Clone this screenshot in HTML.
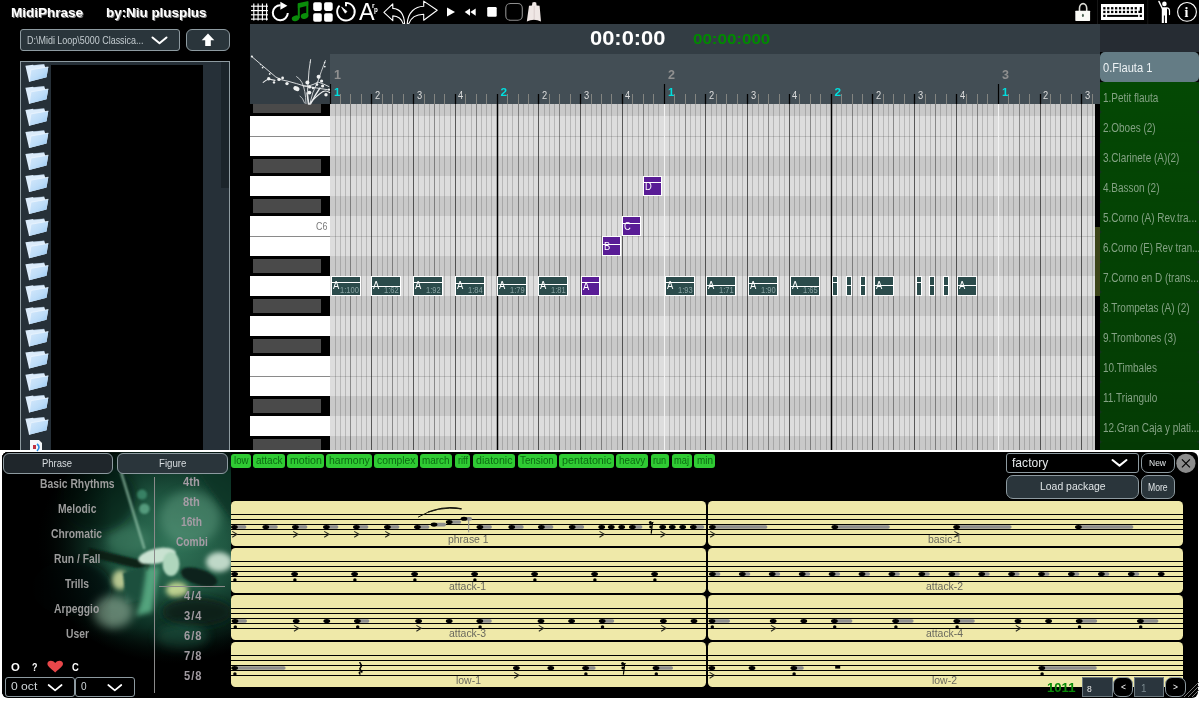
<!DOCTYPE html>
<html><head><meta charset="utf-8"><title>MidiPhrase</title>
<style>
html,body{margin:0;padding:0;}
body{width:1199px;height:704px;background:#fff;position:relative;overflow:hidden;font-family:"Liberation Sans",sans-serif;}
.t{position:absolute;white-space:nowrap;line-height:1;transform-origin:0 0;}
svg{position:absolute;left:0;top:0;overflow:visible;}
.btn{box-sizing:border-box;border:1px solid #8d9aa0;background:#2a353b;}
</style></head><body>
<div id="app" style="position:absolute;left:0;top:0;width:1199px;height:704px;will-change:transform;">
<div style="position:absolute;left:0px;top:0px;width:1199px;height:450px;background:#000;"></div>
<span class="t" style="left:10.50px;top:6.00px;font-size:13px;color:#fff;font-weight:bold;transform:scaleX(1.0381);text-shadow:1px 1px 0 #8a8a8a;">MidiPhrase</span>
<span class="t" style="left:105.50px;top:6.00px;font-size:13px;color:#fff;font-weight:bold;transform:scaleX(1.0307);text-shadow:1px 1px 0 #8a8a8a;">by:Niu plusplus</span>
<div class="btn" style="position:absolute;left:20px;top:29px;width:160px;height:22px;border-radius:3px;"></div>
<span class="t" style="left:26.60px;top:34.69px;font-size:11px;color:#c3cbcf;transform:scaleX(0.8143);">D:\Midi Loop\5000 Classica...</span>
<div class="btn" style="position:absolute;left:186px;top:29px;width:44px;height:22px;border-radius:6px;"></div>
<div style="position:absolute;left:20px;top:61px;width:210px;height:389px;box-sizing:border-box;border:1px solid #8d9aa0;border-bottom:none;background:#263038;"></div>
<div style="position:absolute;left:51px;top:65px;width:152px;height:385px;background:#000;"></div>
<div style="position:absolute;left:221px;top:62px;width:8px;height:126px;background:#1b242a;"></div>
<svg width="1199" height="704" viewBox="0 0 1199 704">
<defs><linearGradient id="fg" x1="0" y1="0" x2="1" y2="1"><stop offset="0" stop-color="#d6e9fb"/><stop offset="0.55" stop-color="#bcdcf8"/><stop offset="1" stop-color="#93c4f0"/></linearGradient></defs>
<polyline points="152.5,37.5 159.5,43.3 166.5,37.5" fill="none" stroke="#fff" stroke-width="2" stroke-linecap="round" stroke-linejoin="round"/>
<polygon points="208,33.5 214.3,40.3 210.8,40.3 210.8,46 205.2,46 205.2,40.3 201.7,40.3" fill="#fff"/>
<g transform="translate(25,64.00)"><path d="M0.4 1.8 L8.1 0.7 L8.6 1.3 L19.2 0.3 L20.3 3.4 L23.3 2.9 L21.5 13.2 L4.1 17.7 Z" fill="#dcecfb"/><path d="M5.9 5.8 L23.3 2.9 L21.5 13.2 L4.1 17.7 Z" fill="url(#fg)"/><path d="M4.3 17.4 L5.9 5.8 L23.3 2.9" fill="none" stroke="#f2f8ff" stroke-width="0.6"/><path d="M8.6 1.5 L19.2 0.5" fill="none" stroke="#b5cde4" stroke-width="0.5"/></g>
<g transform="translate(25,86.06)"><path d="M0.4 1.8 L8.1 0.7 L8.6 1.3 L19.2 0.3 L20.3 3.4 L23.3 2.9 L21.5 13.2 L4.1 17.7 Z" fill="#dcecfb"/><path d="M5.9 5.8 L23.3 2.9 L21.5 13.2 L4.1 17.7 Z" fill="url(#fg)"/><path d="M4.3 17.4 L5.9 5.8 L23.3 2.9" fill="none" stroke="#f2f8ff" stroke-width="0.6"/><path d="M8.6 1.5 L19.2 0.5" fill="none" stroke="#b5cde4" stroke-width="0.5"/></g>
<g transform="translate(25,108.12)"><path d="M0.4 1.8 L8.1 0.7 L8.6 1.3 L19.2 0.3 L20.3 3.4 L23.3 2.9 L21.5 13.2 L4.1 17.7 Z" fill="#dcecfb"/><path d="M5.9 5.8 L23.3 2.9 L21.5 13.2 L4.1 17.7 Z" fill="url(#fg)"/><path d="M4.3 17.4 L5.9 5.8 L23.3 2.9" fill="none" stroke="#f2f8ff" stroke-width="0.6"/><path d="M8.6 1.5 L19.2 0.5" fill="none" stroke="#b5cde4" stroke-width="0.5"/></g>
<g transform="translate(25,130.18)"><path d="M0.4 1.8 L8.1 0.7 L8.6 1.3 L19.2 0.3 L20.3 3.4 L23.3 2.9 L21.5 13.2 L4.1 17.7 Z" fill="#dcecfb"/><path d="M5.9 5.8 L23.3 2.9 L21.5 13.2 L4.1 17.7 Z" fill="url(#fg)"/><path d="M4.3 17.4 L5.9 5.8 L23.3 2.9" fill="none" stroke="#f2f8ff" stroke-width="0.6"/><path d="M8.6 1.5 L19.2 0.5" fill="none" stroke="#b5cde4" stroke-width="0.5"/></g>
<g transform="translate(25,152.24)"><path d="M0.4 1.8 L8.1 0.7 L8.6 1.3 L19.2 0.3 L20.3 3.4 L23.3 2.9 L21.5 13.2 L4.1 17.7 Z" fill="#dcecfb"/><path d="M5.9 5.8 L23.3 2.9 L21.5 13.2 L4.1 17.7 Z" fill="url(#fg)"/><path d="M4.3 17.4 L5.9 5.8 L23.3 2.9" fill="none" stroke="#f2f8ff" stroke-width="0.6"/><path d="M8.6 1.5 L19.2 0.5" fill="none" stroke="#b5cde4" stroke-width="0.5"/></g>
<g transform="translate(25,174.30)"><path d="M0.4 1.8 L8.1 0.7 L8.6 1.3 L19.2 0.3 L20.3 3.4 L23.3 2.9 L21.5 13.2 L4.1 17.7 Z" fill="#dcecfb"/><path d="M5.9 5.8 L23.3 2.9 L21.5 13.2 L4.1 17.7 Z" fill="url(#fg)"/><path d="M4.3 17.4 L5.9 5.8 L23.3 2.9" fill="none" stroke="#f2f8ff" stroke-width="0.6"/><path d="M8.6 1.5 L19.2 0.5" fill="none" stroke="#b5cde4" stroke-width="0.5"/></g>
<g transform="translate(25,196.36)"><path d="M0.4 1.8 L8.1 0.7 L8.6 1.3 L19.2 0.3 L20.3 3.4 L23.3 2.9 L21.5 13.2 L4.1 17.7 Z" fill="#dcecfb"/><path d="M5.9 5.8 L23.3 2.9 L21.5 13.2 L4.1 17.7 Z" fill="url(#fg)"/><path d="M4.3 17.4 L5.9 5.8 L23.3 2.9" fill="none" stroke="#f2f8ff" stroke-width="0.6"/><path d="M8.6 1.5 L19.2 0.5" fill="none" stroke="#b5cde4" stroke-width="0.5"/></g>
<g transform="translate(25,218.42)"><path d="M0.4 1.8 L8.1 0.7 L8.6 1.3 L19.2 0.3 L20.3 3.4 L23.3 2.9 L21.5 13.2 L4.1 17.7 Z" fill="#dcecfb"/><path d="M5.9 5.8 L23.3 2.9 L21.5 13.2 L4.1 17.7 Z" fill="url(#fg)"/><path d="M4.3 17.4 L5.9 5.8 L23.3 2.9" fill="none" stroke="#f2f8ff" stroke-width="0.6"/><path d="M8.6 1.5 L19.2 0.5" fill="none" stroke="#b5cde4" stroke-width="0.5"/></g>
<g transform="translate(25,240.48)"><path d="M0.4 1.8 L8.1 0.7 L8.6 1.3 L19.2 0.3 L20.3 3.4 L23.3 2.9 L21.5 13.2 L4.1 17.7 Z" fill="#dcecfb"/><path d="M5.9 5.8 L23.3 2.9 L21.5 13.2 L4.1 17.7 Z" fill="url(#fg)"/><path d="M4.3 17.4 L5.9 5.8 L23.3 2.9" fill="none" stroke="#f2f8ff" stroke-width="0.6"/><path d="M8.6 1.5 L19.2 0.5" fill="none" stroke="#b5cde4" stroke-width="0.5"/></g>
<g transform="translate(25,262.54)"><path d="M0.4 1.8 L8.1 0.7 L8.6 1.3 L19.2 0.3 L20.3 3.4 L23.3 2.9 L21.5 13.2 L4.1 17.7 Z" fill="#dcecfb"/><path d="M5.9 5.8 L23.3 2.9 L21.5 13.2 L4.1 17.7 Z" fill="url(#fg)"/><path d="M4.3 17.4 L5.9 5.8 L23.3 2.9" fill="none" stroke="#f2f8ff" stroke-width="0.6"/><path d="M8.6 1.5 L19.2 0.5" fill="none" stroke="#b5cde4" stroke-width="0.5"/></g>
<g transform="translate(25,284.60)"><path d="M0.4 1.8 L8.1 0.7 L8.6 1.3 L19.2 0.3 L20.3 3.4 L23.3 2.9 L21.5 13.2 L4.1 17.7 Z" fill="#dcecfb"/><path d="M5.9 5.8 L23.3 2.9 L21.5 13.2 L4.1 17.7 Z" fill="url(#fg)"/><path d="M4.3 17.4 L5.9 5.8 L23.3 2.9" fill="none" stroke="#f2f8ff" stroke-width="0.6"/><path d="M8.6 1.5 L19.2 0.5" fill="none" stroke="#b5cde4" stroke-width="0.5"/></g>
<g transform="translate(25,306.66)"><path d="M0.4 1.8 L8.1 0.7 L8.6 1.3 L19.2 0.3 L20.3 3.4 L23.3 2.9 L21.5 13.2 L4.1 17.7 Z" fill="#dcecfb"/><path d="M5.9 5.8 L23.3 2.9 L21.5 13.2 L4.1 17.7 Z" fill="url(#fg)"/><path d="M4.3 17.4 L5.9 5.8 L23.3 2.9" fill="none" stroke="#f2f8ff" stroke-width="0.6"/><path d="M8.6 1.5 L19.2 0.5" fill="none" stroke="#b5cde4" stroke-width="0.5"/></g>
<g transform="translate(25,328.72)"><path d="M0.4 1.8 L8.1 0.7 L8.6 1.3 L19.2 0.3 L20.3 3.4 L23.3 2.9 L21.5 13.2 L4.1 17.7 Z" fill="#dcecfb"/><path d="M5.9 5.8 L23.3 2.9 L21.5 13.2 L4.1 17.7 Z" fill="url(#fg)"/><path d="M4.3 17.4 L5.9 5.8 L23.3 2.9" fill="none" stroke="#f2f8ff" stroke-width="0.6"/><path d="M8.6 1.5 L19.2 0.5" fill="none" stroke="#b5cde4" stroke-width="0.5"/></g>
<g transform="translate(25,350.78)"><path d="M0.4 1.8 L8.1 0.7 L8.6 1.3 L19.2 0.3 L20.3 3.4 L23.3 2.9 L21.5 13.2 L4.1 17.7 Z" fill="#dcecfb"/><path d="M5.9 5.8 L23.3 2.9 L21.5 13.2 L4.1 17.7 Z" fill="url(#fg)"/><path d="M4.3 17.4 L5.9 5.8 L23.3 2.9" fill="none" stroke="#f2f8ff" stroke-width="0.6"/><path d="M8.6 1.5 L19.2 0.5" fill="none" stroke="#b5cde4" stroke-width="0.5"/></g>
<g transform="translate(25,372.84)"><path d="M0.4 1.8 L8.1 0.7 L8.6 1.3 L19.2 0.3 L20.3 3.4 L23.3 2.9 L21.5 13.2 L4.1 17.7 Z" fill="#dcecfb"/><path d="M5.9 5.8 L23.3 2.9 L21.5 13.2 L4.1 17.7 Z" fill="url(#fg)"/><path d="M4.3 17.4 L5.9 5.8 L23.3 2.9" fill="none" stroke="#f2f8ff" stroke-width="0.6"/><path d="M8.6 1.5 L19.2 0.5" fill="none" stroke="#b5cde4" stroke-width="0.5"/></g>
<g transform="translate(25,394.90)"><path d="M0.4 1.8 L8.1 0.7 L8.6 1.3 L19.2 0.3 L20.3 3.4 L23.3 2.9 L21.5 13.2 L4.1 17.7 Z" fill="#dcecfb"/><path d="M5.9 5.8 L23.3 2.9 L21.5 13.2 L4.1 17.7 Z" fill="url(#fg)"/><path d="M4.3 17.4 L5.9 5.8 L23.3 2.9" fill="none" stroke="#f2f8ff" stroke-width="0.6"/><path d="M8.6 1.5 L19.2 0.5" fill="none" stroke="#b5cde4" stroke-width="0.5"/></g>
<g transform="translate(25,416.96)"><path d="M0.4 1.8 L8.1 0.7 L8.6 1.3 L19.2 0.3 L20.3 3.4 L23.3 2.9 L21.5 13.2 L4.1 17.7 Z" fill="#dcecfb"/><path d="M5.9 5.8 L23.3 2.9 L21.5 13.2 L4.1 17.7 Z" fill="url(#fg)"/><path d="M4.3 17.4 L5.9 5.8 L23.3 2.9" fill="none" stroke="#f2f8ff" stroke-width="0.6"/><path d="M8.6 1.5 L19.2 0.5" fill="none" stroke="#b5cde4" stroke-width="0.5"/></g>
<polygon points="30,440 39,440 42,443 42,450 30,450" fill="#f4f6f8"/>
<rect x="33" y="445" width="3" height="4" fill="#c03040"/><path d="M37 444 q4 3 0 7" stroke="#2a8ae0" stroke-width="1.6" fill="none"/>
<line x1="253.8" y1="3.5" x2="253.8" y2="20.5" stroke="#fff" stroke-width="1.15"/>
<line x1="251" y1="6.2" x2="268" y2="6.2" stroke="#fff" stroke-width="1.15"/>
<line x1="258.1" y1="3.5" x2="258.1" y2="20.5" stroke="#fff" stroke-width="1.15"/>
<line x1="251" y1="10.6" x2="268" y2="10.6" stroke="#fff" stroke-width="1.15"/>
<line x1="262.4" y1="3.5" x2="262.4" y2="20.5" stroke="#fff" stroke-width="1.15"/>
<line x1="251" y1="14.8" x2="268" y2="14.8" stroke="#fff" stroke-width="1.15"/>
<line x1="266.6" y1="3.5" x2="266.6" y2="20.5" stroke="#fff" stroke-width="1.15"/>
<line x1="251" y1="19.1" x2="268" y2="19.1" stroke="#fff" stroke-width="1.15"/>
<path d="M280.6 5.3 A7.5 7.5 0 1 0 287.8 13" fill="none" stroke="#fff" stroke-width="2"/>
<polygon points="280.4,1.8 287.4,5.7 280.4,9.7" fill="#fff"/>
<g fill="#0a8c0a"><path d="M297.8 3.2 L308.3 0.9 L308.3 5.6 L297.8 8.2 Z"/><rect x="297.8" y="4" width="2" height="14"/><rect x="306.3" y="2" width="2" height="13.6"/><ellipse cx="295.6" cy="18.3" rx="3.9" ry="2.8" transform="rotate(-18 295.6 18.3)"/><ellipse cx="304.6" cy="16" rx="3.9" ry="2.8" transform="rotate(-18 304.6 16)"/></g>
<rect x="313.2" y="2.3" width="8.6" height="8.6" rx="1.8" fill="#fff"/>
<rect x="324.1" y="2.3" width="8.6" height="8.6" rx="1.8" fill="#fff"/>
<rect x="313.2" y="13.2" width="8.6" height="8.6" rx="1.8" fill="#fff"/>
<rect x="324.1" y="13.2" width="8.6" height="8.6" rx="1.8" fill="#fff"/>
<path d="M346 6.2 L346 2.9 A8.8 8.8 0 1 1 339.6 5.6" fill="none" stroke="#fff" stroke-width="1.9"/>
<path d="M341.6 7.2 L346.9 11.4 L345.3 13.2 Z" fill="#fff" stroke="#fff" stroke-width="0.8" stroke-linejoin="round"/>
<path d="M383.9 12.3 L392.8 3.9 L392.8 8.4 C399.5 8.8 404 13.5 404.6 23.8 L403.2 23.8 C401.6 19 398.6 16.2 392.8 15.9 L392.8 20.7 Z" fill="none" stroke="#fff" stroke-width="1.1" stroke-linejoin="round"/>
<path d="M437.2 10.3 L423.7 1.1 L423.7 6.3 C415 6.6 408 12 407.2 23.8 L408.7 23.8 C411 17.5 416 14.4 423.7 14.3 L423.7 20.2 Z" fill="none" stroke="#fff" stroke-width="1.1" stroke-linejoin="round"/>
<polygon points="447,7.4 455,12 447,16.6" fill="#fff"/>
<polygon points="470,8.4 470,15.7 464.7,12" fill="#fff"/><polygon points="475.7,8.4 475.7,15.7 470.3,12" fill="#fff"/>
<rect x="487.2" y="7" width="9.5" height="9.7" rx="1.2" fill="#fff"/>
<rect x="505.8" y="3.5" width="16.5" height="16.8" rx="4.5" fill="none" stroke="#8e8e8e" stroke-width="1.1"/>
<path d="M532.4 2.6 Q534.3 1.4 536.2 2.6 L536.6 5.4 L539.6 5.8 L541 21.4 Q534 18.2 526.8 21.4 L529 5.8 L532 5.4 Z" fill="#efe7e5"/>
<line x1="534.2" y1="6" x2="534.2" y2="19.6" stroke="#d4c8c6" stroke-width="0.8"/>
<path d="M1079.5 11.4 L1079.5 8.2 A3.6 4.6 0 0 1 1086.7 8.2 L1086.7 11.4" fill="none" stroke="#dcdcd6" stroke-width="1.6"/>
<rect x="1075.3" y="10.7" width="14.8" height="10.2" rx="0.6" fill="#fafaf6"/><ellipse cx="1082.9" cy="15.4" rx="1" ry="1.6" fill="#4a6050"/>
<rect x="1101" y="4" width="43" height="16" fill="#fff"/>
<rect x="1103.20" y="7.1" width="2.3" height="2.3" fill="#000"/>
<rect x="1107.13" y="7.1" width="2.3" height="2.3" fill="#000"/>
<rect x="1111.06" y="7.1" width="2.3" height="2.3" fill="#000"/>
<rect x="1114.99" y="7.1" width="2.3" height="2.3" fill="#000"/>
<rect x="1118.92" y="7.1" width="2.3" height="2.3" fill="#000"/>
<rect x="1122.85" y="7.1" width="2.3" height="2.3" fill="#000"/>
<rect x="1126.78" y="7.1" width="2.3" height="2.3" fill="#000"/>
<rect x="1130.71" y="7.1" width="2.3" height="2.3" fill="#000"/>
<rect x="1134.64" y="7.1" width="2.3" height="2.3" fill="#000"/>
<rect x="1103.20" y="10.8" width="2.3" height="2.3" fill="#000"/>
<rect x="1107.13" y="10.8" width="2.3" height="2.3" fill="#000"/>
<rect x="1111.06" y="10.8" width="2.3" height="2.3" fill="#000"/>
<rect x="1114.99" y="10.8" width="2.3" height="2.3" fill="#000"/>
<rect x="1118.92" y="10.8" width="2.3" height="2.3" fill="#000"/>
<rect x="1122.85" y="10.8" width="2.3" height="2.3" fill="#000"/>
<rect x="1126.78" y="10.8" width="2.3" height="2.3" fill="#000"/>
<rect x="1130.71" y="10.8" width="2.3" height="2.3" fill="#000"/>
<rect x="1134.64" y="10.8" width="2.3" height="2.3" fill="#000"/>
<path d="M1139.8 7.1 L1141.9 7.1 L1141.9 13.1 L1138.4 13.1 L1138.4 10.8 L1139.8 10.8 Z" fill="#000"/>
<rect x="1103.2" y="14.8" width="2.3" height="2.2" fill="#000"/><rect x="1107.1" y="14.9" width="31" height="2" fill="#000"/><rect x="1139.7" y="14.8" width="2.2" height="2.2" fill="#000"/>
<rect x="1147.4" y="0" width="0.8" height="24" fill="#1c1c1c"/><rect x="1097.2" y="0" width="0.8" height="24" fill="#1c1c1c"/>
<circle cx="1164.4" cy="3.9" r="2.3" fill="#fff"/>
<path d="M1161.8 8.6 Q1161.8 7.2 1163.2 7.2 L1165.6 7.2 Q1167 7.2 1167 8.6 L1167 23 L1164.9 23 L1164.9 15.4 L1163.9 15.4 L1163.9 23 L1161.8 23 Z" fill="#fff"/>
<path d="M1162.6 9 L1158.9 1.4" fill="none" stroke="#fff" stroke-width="1.4" stroke-linecap="round"/>
<path d="M1166.6 7.9 Q1169.5 8 1169.5 10.8 L1169.5 14.6" fill="none" stroke="#fff" stroke-width="1.2" stroke-linecap="round"/>
<circle cx="1187" cy="11.9" r="9.4" fill="none" stroke="#fff" stroke-width="1.1"/>
</svg>
<span class="t" style="left:359.20px;top:-0.15px;font-size:23.8px;color:#fff;transform:scaleX(0.9827);">A</span>
<span class="t" style="left:371.50px;top:1.84px;font-size:7.4px;color:#fff;font-weight:bold;transform:scaleX(0.9029);">r</span>
<span class="t" style="left:374.30px;top:6.43px;font-size:8px;color:#fff;font-weight:bold;transform:scaleX(0.7776);">p</span>
<span class="t" style="left:1184.6px;top:5.9px;font-size:14px;color:#fff;font-family:'Liberation Serif',serif;font-weight:bold;">i</span>
<div style="position:absolute;left:250px;top:24px;width:850px;height:80px;background:#333d44;"></div>
<div style="position:absolute;left:330px;top:54px;width:770px;height:50px;background:#434e55;"></div>
<div style="position:absolute;left:1100px;top:24px;width:99px;height:28px;background:#262c33;"></div>
<span class="t" style="left:590.30px;top:29.11px;font-size:19.6px;color:#fff;font-weight:bold;transform:scaleX(1.1175);">00:0:00</span>
<span class="t" style="left:693.00px;top:32.44px;font-size:14.6px;color:#008a00;font-weight:bold;transform:scaleX(1.1613);">00:00:000</span>
<svg width="1199" height="704" viewBox="0 0 1199 704" shape-rendering="crispEdges">
<rect x="250" y="104" width="80" height="346" fill="#fff"/>
<rect x="330" y="104" width="765" height="346" fill="#dddddd"/>
<rect x="250" y="104" width="80" height="12" fill="#000"/>
<rect x="253" y="104" width="68" height="9" fill="#4a4a4a"/>
<rect x="330" y="104" width="765" height="12" fill="#c9c9c9"/>
<rect x="250" y="156" width="80" height="20" fill="#000"/>
<rect x="253" y="159" width="68" height="14" fill="#4a4a4a"/>
<rect x="330" y="156" width="765" height="20" fill="#c9c9c9"/>
<rect x="250" y="196" width="80" height="20" fill="#000"/>
<rect x="253" y="199" width="68" height="14" fill="#4a4a4a"/>
<rect x="330" y="196" width="765" height="20" fill="#c9c9c9"/>
<rect x="250" y="256" width="80" height="20" fill="#000"/>
<rect x="253" y="259" width="68" height="14" fill="#4a4a4a"/>
<rect x="330" y="256" width="765" height="20" fill="#c9c9c9"/>
<rect x="250" y="296" width="80" height="20" fill="#000"/>
<rect x="253" y="299" width="68" height="14" fill="#4a4a4a"/>
<rect x="330" y="296" width="765" height="20" fill="#c9c9c9"/>
<rect x="250" y="336" width="80" height="20" fill="#000"/>
<rect x="253" y="339" width="68" height="14" fill="#4a4a4a"/>
<rect x="330" y="336" width="765" height="20" fill="#c9c9c9"/>
<rect x="250" y="396" width="80" height="20" fill="#000"/>
<rect x="253" y="399" width="68" height="14" fill="#4a4a4a"/>
<rect x="330" y="396" width="765" height="20" fill="#c9c9c9"/>
<rect x="250" y="436" width="80" height="14" fill="#000"/>
<rect x="253" y="439" width="68" height="11" fill="#4a4a4a"/>
<rect x="330" y="436" width="765" height="14" fill="#c9c9c9"/>
<rect x="250" y="136" width="80" height="1" fill="#8a8a8a"/>
<rect x="330" y="136" width="765" height="1" fill="#bdbdbd"/>
<rect x="250" y="236" width="80" height="1" fill="#8a8a8a"/>
<rect x="330" y="236" width="765" height="1" fill="#bdbdbd"/>
<rect x="250" y="376" width="80" height="1" fill="#8a8a8a"/>
<rect x="330" y="376" width="765" height="1" fill="#bdbdbd"/>
</svg>
<svg width="1199" height="704" viewBox="0 0 1199 704">
<line x1="330.50" y1="84" x2="330.50" y2="104" stroke="#000" stroke-width="1.2"/>
<line x1="335.50" y1="104" x2="335.50" y2="450" stroke="#000" stroke-opacity="0.17" stroke-width="1"/>
<line x1="340.50" y1="104" x2="340.50" y2="450" stroke="#000" stroke-opacity="0.17" stroke-width="1"/>
<line x1="340.50" y1="94" x2="340.50" y2="104" stroke="#8a8a86" stroke-width="0.9"/>
<line x1="345.50" y1="104" x2="345.50" y2="450" stroke="#000" stroke-opacity="0.17" stroke-width="1"/>
<line x1="350.50" y1="104" x2="350.50" y2="450" stroke="#000" stroke-opacity="0.38" stroke-width="1"/>
<line x1="350.50" y1="94" x2="350.50" y2="104" stroke="#8a8a86" stroke-width="0.9"/>
<line x1="356.50" y1="104" x2="356.50" y2="450" stroke="#000" stroke-opacity="0.17" stroke-width="1"/>
<line x1="361.50" y1="104" x2="361.50" y2="450" stroke="#000" stroke-opacity="0.17" stroke-width="1"/>
<line x1="361.50" y1="94" x2="361.50" y2="104" stroke="#8a8a86" stroke-width="0.9"/>
<line x1="366.50" y1="104" x2="366.50" y2="450" stroke="#000" stroke-opacity="0.17" stroke-width="1"/>
<line x1="371.50" y1="104" x2="371.50" y2="450" stroke="#000" stroke-opacity="0.6" stroke-width="1"/>
<line x1="371.50" y1="94" x2="371.50" y2="104" stroke="#000" stroke-width="1.3"/>
<line x1="377.50" y1="104" x2="377.50" y2="450" stroke="#000" stroke-opacity="0.17" stroke-width="1"/>
<line x1="382.50" y1="104" x2="382.50" y2="450" stroke="#000" stroke-opacity="0.17" stroke-width="1"/>
<line x1="382.50" y1="94" x2="382.50" y2="104" stroke="#8a8a86" stroke-width="0.9"/>
<line x1="387.50" y1="104" x2="387.50" y2="450" stroke="#000" stroke-opacity="0.17" stroke-width="1"/>
<line x1="392.50" y1="104" x2="392.50" y2="450" stroke="#000" stroke-opacity="0.38" stroke-width="1"/>
<line x1="392.50" y1="94" x2="392.50" y2="104" stroke="#8a8a86" stroke-width="0.9"/>
<line x1="397.50" y1="104" x2="397.50" y2="450" stroke="#000" stroke-opacity="0.17" stroke-width="1"/>
<line x1="403.50" y1="104" x2="403.50" y2="450" stroke="#000" stroke-opacity="0.17" stroke-width="1"/>
<line x1="403.50" y1="94" x2="403.50" y2="104" stroke="#8a8a86" stroke-width="0.9"/>
<line x1="408.50" y1="104" x2="408.50" y2="450" stroke="#000" stroke-opacity="0.17" stroke-width="1"/>
<line x1="413.50" y1="104" x2="413.50" y2="450" stroke="#000" stroke-opacity="0.6" stroke-width="1"/>
<line x1="413.50" y1="94" x2="413.50" y2="104" stroke="#000" stroke-width="1.3"/>
<line x1="418.50" y1="104" x2="418.50" y2="450" stroke="#000" stroke-opacity="0.17" stroke-width="1"/>
<line x1="424.50" y1="104" x2="424.50" y2="450" stroke="#000" stroke-opacity="0.17" stroke-width="1"/>
<line x1="424.50" y1="94" x2="424.50" y2="104" stroke="#8a8a86" stroke-width="0.9"/>
<line x1="429.50" y1="104" x2="429.50" y2="450" stroke="#000" stroke-opacity="0.17" stroke-width="1"/>
<line x1="434.50" y1="104" x2="434.50" y2="450" stroke="#000" stroke-opacity="0.38" stroke-width="1"/>
<line x1="434.50" y1="94" x2="434.50" y2="104" stroke="#8a8a86" stroke-width="0.9"/>
<line x1="439.50" y1="104" x2="439.50" y2="450" stroke="#000" stroke-opacity="0.17" stroke-width="1"/>
<line x1="444.50" y1="104" x2="444.50" y2="450" stroke="#000" stroke-opacity="0.17" stroke-width="1"/>
<line x1="444.50" y1="94" x2="444.50" y2="104" stroke="#8a8a86" stroke-width="0.9"/>
<line x1="450.50" y1="104" x2="450.50" y2="450" stroke="#000" stroke-opacity="0.17" stroke-width="1"/>
<line x1="455.50" y1="104" x2="455.50" y2="450" stroke="#000" stroke-opacity="0.6" stroke-width="1"/>
<line x1="455.50" y1="94" x2="455.50" y2="104" stroke="#000" stroke-width="1.3"/>
<line x1="460.50" y1="104" x2="460.50" y2="450" stroke="#000" stroke-opacity="0.17" stroke-width="1"/>
<line x1="465.50" y1="104" x2="465.50" y2="450" stroke="#000" stroke-opacity="0.17" stroke-width="1"/>
<line x1="465.50" y1="94" x2="465.50" y2="104" stroke="#8a8a86" stroke-width="0.9"/>
<line x1="471.50" y1="104" x2="471.50" y2="450" stroke="#000" stroke-opacity="0.17" stroke-width="1"/>
<line x1="476.50" y1="104" x2="476.50" y2="450" stroke="#000" stroke-opacity="0.38" stroke-width="1"/>
<line x1="476.50" y1="94" x2="476.50" y2="104" stroke="#8a8a86" stroke-width="0.9"/>
<line x1="481.50" y1="104" x2="481.50" y2="450" stroke="#000" stroke-opacity="0.17" stroke-width="1"/>
<line x1="486.50" y1="104" x2="486.50" y2="450" stroke="#000" stroke-opacity="0.17" stroke-width="1"/>
<line x1="486.50" y1="94" x2="486.50" y2="104" stroke="#8a8a86" stroke-width="0.9"/>
<line x1="491.50" y1="104" x2="491.50" y2="450" stroke="#000" stroke-opacity="0.17" stroke-width="1"/>
<line x1="497.50" y1="104" x2="497.50" y2="450" stroke="#000" stroke-opacity="1" stroke-width="1.5"/>
<line x1="497.50" y1="94" x2="497.50" y2="104" stroke="#000" stroke-width="1.3"/>
<line x1="502.50" y1="104" x2="502.50" y2="450" stroke="#000" stroke-opacity="0.17" stroke-width="1"/>
<line x1="507.50" y1="104" x2="507.50" y2="450" stroke="#000" stroke-opacity="0.17" stroke-width="1"/>
<line x1="507.50" y1="94" x2="507.50" y2="104" stroke="#8a8a86" stroke-width="0.9"/>
<line x1="512.50" y1="104" x2="512.50" y2="450" stroke="#000" stroke-opacity="0.17" stroke-width="1"/>
<line x1="518.50" y1="104" x2="518.50" y2="450" stroke="#000" stroke-opacity="0.38" stroke-width="1"/>
<line x1="518.50" y1="94" x2="518.50" y2="104" stroke="#8a8a86" stroke-width="0.9"/>
<line x1="523.50" y1="104" x2="523.50" y2="450" stroke="#000" stroke-opacity="0.17" stroke-width="1"/>
<line x1="528.50" y1="104" x2="528.50" y2="450" stroke="#000" stroke-opacity="0.17" stroke-width="1"/>
<line x1="528.50" y1="94" x2="528.50" y2="104" stroke="#8a8a86" stroke-width="0.9"/>
<line x1="533.50" y1="104" x2="533.50" y2="450" stroke="#000" stroke-opacity="0.17" stroke-width="1"/>
<line x1="538.50" y1="104" x2="538.50" y2="450" stroke="#000" stroke-opacity="0.6" stroke-width="1"/>
<line x1="538.50" y1="94" x2="538.50" y2="104" stroke="#000" stroke-width="1.3"/>
<line x1="544.50" y1="104" x2="544.50" y2="450" stroke="#000" stroke-opacity="0.17" stroke-width="1"/>
<line x1="549.50" y1="104" x2="549.50" y2="450" stroke="#000" stroke-opacity="0.17" stroke-width="1"/>
<line x1="549.50" y1="94" x2="549.50" y2="104" stroke="#8a8a86" stroke-width="0.9"/>
<line x1="554.50" y1="104" x2="554.50" y2="450" stroke="#000" stroke-opacity="0.17" stroke-width="1"/>
<line x1="559.50" y1="104" x2="559.50" y2="450" stroke="#000" stroke-opacity="0.38" stroke-width="1"/>
<line x1="559.50" y1="94" x2="559.50" y2="104" stroke="#8a8a86" stroke-width="0.9"/>
<line x1="565.50" y1="104" x2="565.50" y2="450" stroke="#000" stroke-opacity="0.17" stroke-width="1"/>
<line x1="570.50" y1="104" x2="570.50" y2="450" stroke="#000" stroke-opacity="0.17" stroke-width="1"/>
<line x1="570.50" y1="94" x2="570.50" y2="104" stroke="#8a8a86" stroke-width="0.9"/>
<line x1="575.50" y1="104" x2="575.50" y2="450" stroke="#000" stroke-opacity="0.17" stroke-width="1"/>
<line x1="580.50" y1="104" x2="580.50" y2="450" stroke="#000" stroke-opacity="0.6" stroke-width="1"/>
<line x1="580.50" y1="94" x2="580.50" y2="104" stroke="#000" stroke-width="1.3"/>
<line x1="585.50" y1="104" x2="585.50" y2="450" stroke="#000" stroke-opacity="0.17" stroke-width="1"/>
<line x1="591.50" y1="104" x2="591.50" y2="450" stroke="#000" stroke-opacity="0.17" stroke-width="1"/>
<line x1="591.50" y1="94" x2="591.50" y2="104" stroke="#8a8a86" stroke-width="0.9"/>
<line x1="596.50" y1="104" x2="596.50" y2="450" stroke="#000" stroke-opacity="0.17" stroke-width="1"/>
<line x1="601.50" y1="104" x2="601.50" y2="450" stroke="#000" stroke-opacity="0.38" stroke-width="1"/>
<line x1="601.50" y1="94" x2="601.50" y2="104" stroke="#8a8a86" stroke-width="0.9"/>
<line x1="606.50" y1="104" x2="606.50" y2="450" stroke="#000" stroke-opacity="0.17" stroke-width="1"/>
<line x1="611.50" y1="104" x2="611.50" y2="450" stroke="#000" stroke-opacity="0.17" stroke-width="1"/>
<line x1="611.50" y1="94" x2="611.50" y2="104" stroke="#8a8a86" stroke-width="0.9"/>
<line x1="617.50" y1="104" x2="617.50" y2="450" stroke="#000" stroke-opacity="0.17" stroke-width="1"/>
<line x1="622.50" y1="104" x2="622.50" y2="450" stroke="#000" stroke-opacity="0.6" stroke-width="1"/>
<line x1="622.50" y1="94" x2="622.50" y2="104" stroke="#000" stroke-width="1.3"/>
<line x1="627.50" y1="104" x2="627.50" y2="450" stroke="#000" stroke-opacity="0.17" stroke-width="1"/>
<line x1="632.50" y1="104" x2="632.50" y2="450" stroke="#000" stroke-opacity="0.17" stroke-width="1"/>
<line x1="632.50" y1="94" x2="632.50" y2="104" stroke="#8a8a86" stroke-width="0.9"/>
<line x1="638.50" y1="104" x2="638.50" y2="450" stroke="#000" stroke-opacity="0.17" stroke-width="1"/>
<line x1="643.50" y1="104" x2="643.50" y2="450" stroke="#000" stroke-opacity="0.38" stroke-width="1"/>
<line x1="643.50" y1="94" x2="643.50" y2="104" stroke="#8a8a86" stroke-width="0.9"/>
<line x1="648.50" y1="104" x2="648.50" y2="450" stroke="#000" stroke-opacity="0.17" stroke-width="1"/>
<line x1="653.50" y1="104" x2="653.50" y2="450" stroke="#000" stroke-opacity="0.17" stroke-width="1"/>
<line x1="653.50" y1="94" x2="653.50" y2="104" stroke="#8a8a86" stroke-width="0.9"/>
<line x1="658.50" y1="104" x2="658.50" y2="450" stroke="#000" stroke-opacity="0.17" stroke-width="1"/>
<line x1="664.50" y1="104" x2="664.50" y2="450" stroke="#f2f2f2" stroke-opacity="1" stroke-width="1"/>
<line x1="664.50" y1="84" x2="664.50" y2="104" stroke="#000" stroke-width="1.2"/>
<line x1="669.50" y1="104" x2="669.50" y2="450" stroke="#000" stroke-opacity="0.17" stroke-width="1"/>
<line x1="674.50" y1="104" x2="674.50" y2="450" stroke="#000" stroke-opacity="0.17" stroke-width="1"/>
<line x1="674.50" y1="94" x2="674.50" y2="104" stroke="#8a8a86" stroke-width="0.9"/>
<line x1="679.50" y1="104" x2="679.50" y2="450" stroke="#000" stroke-opacity="0.17" stroke-width="1"/>
<line x1="685.50" y1="104" x2="685.50" y2="450" stroke="#000" stroke-opacity="0.38" stroke-width="1"/>
<line x1="685.50" y1="94" x2="685.50" y2="104" stroke="#8a8a86" stroke-width="0.9"/>
<line x1="690.50" y1="104" x2="690.50" y2="450" stroke="#000" stroke-opacity="0.17" stroke-width="1"/>
<line x1="695.50" y1="104" x2="695.50" y2="450" stroke="#000" stroke-opacity="0.17" stroke-width="1"/>
<line x1="695.50" y1="94" x2="695.50" y2="104" stroke="#8a8a86" stroke-width="0.9"/>
<line x1="700.50" y1="104" x2="700.50" y2="450" stroke="#000" stroke-opacity="0.17" stroke-width="1"/>
<line x1="705.50" y1="104" x2="705.50" y2="450" stroke="#000" stroke-opacity="0.6" stroke-width="1"/>
<line x1="705.50" y1="94" x2="705.50" y2="104" stroke="#000" stroke-width="1.3"/>
<line x1="711.50" y1="104" x2="711.50" y2="450" stroke="#000" stroke-opacity="0.17" stroke-width="1"/>
<line x1="716.50" y1="104" x2="716.50" y2="450" stroke="#000" stroke-opacity="0.17" stroke-width="1"/>
<line x1="716.50" y1="94" x2="716.50" y2="104" stroke="#8a8a86" stroke-width="0.9"/>
<line x1="721.50" y1="104" x2="721.50" y2="450" stroke="#000" stroke-opacity="0.17" stroke-width="1"/>
<line x1="726.50" y1="104" x2="726.50" y2="450" stroke="#000" stroke-opacity="0.38" stroke-width="1"/>
<line x1="726.50" y1="94" x2="726.50" y2="104" stroke="#8a8a86" stroke-width="0.9"/>
<line x1="732.50" y1="104" x2="732.50" y2="450" stroke="#000" stroke-opacity="0.17" stroke-width="1"/>
<line x1="737.50" y1="104" x2="737.50" y2="450" stroke="#000" stroke-opacity="0.17" stroke-width="1"/>
<line x1="737.50" y1="94" x2="737.50" y2="104" stroke="#8a8a86" stroke-width="0.9"/>
<line x1="742.50" y1="104" x2="742.50" y2="450" stroke="#000" stroke-opacity="0.17" stroke-width="1"/>
<line x1="747.50" y1="104" x2="747.50" y2="450" stroke="#000" stroke-opacity="0.6" stroke-width="1"/>
<line x1="747.50" y1="94" x2="747.50" y2="104" stroke="#000" stroke-width="1.3"/>
<line x1="752.50" y1="104" x2="752.50" y2="450" stroke="#000" stroke-opacity="0.17" stroke-width="1"/>
<line x1="758.50" y1="104" x2="758.50" y2="450" stroke="#000" stroke-opacity="0.17" stroke-width="1"/>
<line x1="758.50" y1="94" x2="758.50" y2="104" stroke="#8a8a86" stroke-width="0.9"/>
<line x1="763.50" y1="104" x2="763.50" y2="450" stroke="#000" stroke-opacity="0.17" stroke-width="1"/>
<line x1="768.50" y1="104" x2="768.50" y2="450" stroke="#000" stroke-opacity="0.38" stroke-width="1"/>
<line x1="768.50" y1="94" x2="768.50" y2="104" stroke="#8a8a86" stroke-width="0.9"/>
<line x1="773.50" y1="104" x2="773.50" y2="450" stroke="#000" stroke-opacity="0.17" stroke-width="1"/>
<line x1="779.50" y1="104" x2="779.50" y2="450" stroke="#000" stroke-opacity="0.17" stroke-width="1"/>
<line x1="779.50" y1="94" x2="779.50" y2="104" stroke="#8a8a86" stroke-width="0.9"/>
<line x1="784.50" y1="104" x2="784.50" y2="450" stroke="#000" stroke-opacity="0.17" stroke-width="1"/>
<line x1="789.50" y1="104" x2="789.50" y2="450" stroke="#000" stroke-opacity="0.6" stroke-width="1"/>
<line x1="789.50" y1="94" x2="789.50" y2="104" stroke="#000" stroke-width="1.3"/>
<line x1="794.50" y1="104" x2="794.50" y2="450" stroke="#000" stroke-opacity="0.17" stroke-width="1"/>
<line x1="799.50" y1="104" x2="799.50" y2="450" stroke="#000" stroke-opacity="0.17" stroke-width="1"/>
<line x1="799.50" y1="94" x2="799.50" y2="104" stroke="#8a8a86" stroke-width="0.9"/>
<line x1="805.50" y1="104" x2="805.50" y2="450" stroke="#000" stroke-opacity="0.17" stroke-width="1"/>
<line x1="810.50" y1="104" x2="810.50" y2="450" stroke="#000" stroke-opacity="0.38" stroke-width="1"/>
<line x1="810.50" y1="94" x2="810.50" y2="104" stroke="#8a8a86" stroke-width="0.9"/>
<line x1="815.50" y1="104" x2="815.50" y2="450" stroke="#000" stroke-opacity="0.17" stroke-width="1"/>
<line x1="820.50" y1="104" x2="820.50" y2="450" stroke="#000" stroke-opacity="0.17" stroke-width="1"/>
<line x1="820.50" y1="94" x2="820.50" y2="104" stroke="#8a8a86" stroke-width="0.9"/>
<line x1="826.50" y1="104" x2="826.50" y2="450" stroke="#000" stroke-opacity="0.17" stroke-width="1"/>
<line x1="831.50" y1="104" x2="831.50" y2="450" stroke="#000" stroke-opacity="1" stroke-width="1.5"/>
<line x1="831.50" y1="94" x2="831.50" y2="104" stroke="#000" stroke-width="1.3"/>
<line x1="836.50" y1="104" x2="836.50" y2="450" stroke="#000" stroke-opacity="0.17" stroke-width="1"/>
<line x1="841.50" y1="104" x2="841.50" y2="450" stroke="#000" stroke-opacity="0.17" stroke-width="1"/>
<line x1="841.50" y1="94" x2="841.50" y2="104" stroke="#8a8a86" stroke-width="0.9"/>
<line x1="846.50" y1="104" x2="846.50" y2="450" stroke="#000" stroke-opacity="0.17" stroke-width="1"/>
<line x1="852.50" y1="104" x2="852.50" y2="450" stroke="#000" stroke-opacity="0.38" stroke-width="1"/>
<line x1="852.50" y1="94" x2="852.50" y2="104" stroke="#8a8a86" stroke-width="0.9"/>
<line x1="857.50" y1="104" x2="857.50" y2="450" stroke="#000" stroke-opacity="0.17" stroke-width="1"/>
<line x1="862.50" y1="104" x2="862.50" y2="450" stroke="#000" stroke-opacity="0.17" stroke-width="1"/>
<line x1="862.50" y1="94" x2="862.50" y2="104" stroke="#8a8a86" stroke-width="0.9"/>
<line x1="867.50" y1="104" x2="867.50" y2="450" stroke="#000" stroke-opacity="0.17" stroke-width="1"/>
<line x1="872.50" y1="104" x2="872.50" y2="450" stroke="#000" stroke-opacity="0.6" stroke-width="1"/>
<line x1="872.50" y1="94" x2="872.50" y2="104" stroke="#000" stroke-width="1.3"/>
<line x1="878.50" y1="104" x2="878.50" y2="450" stroke="#000" stroke-opacity="0.17" stroke-width="1"/>
<line x1="883.50" y1="104" x2="883.50" y2="450" stroke="#000" stroke-opacity="0.17" stroke-width="1"/>
<line x1="883.50" y1="94" x2="883.50" y2="104" stroke="#8a8a86" stroke-width="0.9"/>
<line x1="888.50" y1="104" x2="888.50" y2="450" stroke="#000" stroke-opacity="0.17" stroke-width="1"/>
<line x1="893.50" y1="104" x2="893.50" y2="450" stroke="#000" stroke-opacity="0.38" stroke-width="1"/>
<line x1="893.50" y1="94" x2="893.50" y2="104" stroke="#8a8a86" stroke-width="0.9"/>
<line x1="899.50" y1="104" x2="899.50" y2="450" stroke="#000" stroke-opacity="0.17" stroke-width="1"/>
<line x1="904.50" y1="104" x2="904.50" y2="450" stroke="#000" stroke-opacity="0.17" stroke-width="1"/>
<line x1="904.50" y1="94" x2="904.50" y2="104" stroke="#8a8a86" stroke-width="0.9"/>
<line x1="909.50" y1="104" x2="909.50" y2="450" stroke="#000" stroke-opacity="0.17" stroke-width="1"/>
<line x1="914.50" y1="104" x2="914.50" y2="450" stroke="#000" stroke-opacity="0.6" stroke-width="1"/>
<line x1="914.50" y1="94" x2="914.50" y2="104" stroke="#000" stroke-width="1.3"/>
<line x1="919.50" y1="104" x2="919.50" y2="450" stroke="#000" stroke-opacity="0.17" stroke-width="1"/>
<line x1="925.50" y1="104" x2="925.50" y2="450" stroke="#000" stroke-opacity="0.17" stroke-width="1"/>
<line x1="925.50" y1="94" x2="925.50" y2="104" stroke="#8a8a86" stroke-width="0.9"/>
<line x1="930.50" y1="104" x2="930.50" y2="450" stroke="#000" stroke-opacity="0.17" stroke-width="1"/>
<line x1="935.50" y1="104" x2="935.50" y2="450" stroke="#000" stroke-opacity="0.38" stroke-width="1"/>
<line x1="935.50" y1="94" x2="935.50" y2="104" stroke="#8a8a86" stroke-width="0.9"/>
<line x1="940.50" y1="104" x2="940.50" y2="450" stroke="#000" stroke-opacity="0.17" stroke-width="1"/>
<line x1="946.50" y1="104" x2="946.50" y2="450" stroke="#000" stroke-opacity="0.17" stroke-width="1"/>
<line x1="946.50" y1="94" x2="946.50" y2="104" stroke="#8a8a86" stroke-width="0.9"/>
<line x1="951.50" y1="104" x2="951.50" y2="450" stroke="#000" stroke-opacity="0.17" stroke-width="1"/>
<line x1="956.50" y1="104" x2="956.50" y2="450" stroke="#000" stroke-opacity="0.6" stroke-width="1"/>
<line x1="956.50" y1="94" x2="956.50" y2="104" stroke="#000" stroke-width="1.3"/>
<line x1="961.50" y1="104" x2="961.50" y2="450" stroke="#000" stroke-opacity="0.17" stroke-width="1"/>
<line x1="966.50" y1="104" x2="966.50" y2="450" stroke="#000" stroke-opacity="0.17" stroke-width="1"/>
<line x1="966.50" y1="94" x2="966.50" y2="104" stroke="#8a8a86" stroke-width="0.9"/>
<line x1="972.50" y1="104" x2="972.50" y2="450" stroke="#000" stroke-opacity="0.17" stroke-width="1"/>
<line x1="977.50" y1="104" x2="977.50" y2="450" stroke="#000" stroke-opacity="0.38" stroke-width="1"/>
<line x1="977.50" y1="94" x2="977.50" y2="104" stroke="#8a8a86" stroke-width="0.9"/>
<line x1="982.50" y1="104" x2="982.50" y2="450" stroke="#000" stroke-opacity="0.17" stroke-width="1"/>
<line x1="987.50" y1="104" x2="987.50" y2="450" stroke="#000" stroke-opacity="0.17" stroke-width="1"/>
<line x1="987.50" y1="94" x2="987.50" y2="104" stroke="#8a8a86" stroke-width="0.9"/>
<line x1="993.50" y1="104" x2="993.50" y2="450" stroke="#000" stroke-opacity="0.17" stroke-width="1"/>
<line x1="998.50" y1="104" x2="998.50" y2="450" stroke="#f2f2f2" stroke-opacity="1" stroke-width="1"/>
<line x1="998.50" y1="84" x2="998.50" y2="104" stroke="#000" stroke-width="1.2"/>
<line x1="1003.50" y1="104" x2="1003.50" y2="450" stroke="#000" stroke-opacity="0.17" stroke-width="1"/>
<line x1="1008.50" y1="104" x2="1008.50" y2="450" stroke="#000" stroke-opacity="0.17" stroke-width="1"/>
<line x1="1008.50" y1="94" x2="1008.50" y2="104" stroke="#8a8a86" stroke-width="0.9"/>
<line x1="1013.50" y1="104" x2="1013.50" y2="450" stroke="#000" stroke-opacity="0.17" stroke-width="1"/>
<line x1="1019.50" y1="104" x2="1019.50" y2="450" stroke="#000" stroke-opacity="0.38" stroke-width="1"/>
<line x1="1019.50" y1="94" x2="1019.50" y2="104" stroke="#8a8a86" stroke-width="0.9"/>
<line x1="1024.50" y1="104" x2="1024.50" y2="450" stroke="#000" stroke-opacity="0.17" stroke-width="1"/>
<line x1="1029.50" y1="104" x2="1029.50" y2="450" stroke="#000" stroke-opacity="0.17" stroke-width="1"/>
<line x1="1029.50" y1="94" x2="1029.50" y2="104" stroke="#8a8a86" stroke-width="0.9"/>
<line x1="1034.50" y1="104" x2="1034.50" y2="450" stroke="#000" stroke-opacity="0.17" stroke-width="1"/>
<line x1="1040.50" y1="104" x2="1040.50" y2="450" stroke="#000" stroke-opacity="0.6" stroke-width="1"/>
<line x1="1040.50" y1="94" x2="1040.50" y2="104" stroke="#000" stroke-width="1.3"/>
<line x1="1045.50" y1="104" x2="1045.50" y2="450" stroke="#000" stroke-opacity="0.17" stroke-width="1"/>
<line x1="1050.50" y1="104" x2="1050.50" y2="450" stroke="#000" stroke-opacity="0.17" stroke-width="1"/>
<line x1="1050.50" y1="94" x2="1050.50" y2="104" stroke="#8a8a86" stroke-width="0.9"/>
<line x1="1055.50" y1="104" x2="1055.50" y2="450" stroke="#000" stroke-opacity="0.17" stroke-width="1"/>
<line x1="1060.50" y1="104" x2="1060.50" y2="450" stroke="#000" stroke-opacity="0.38" stroke-width="1"/>
<line x1="1060.50" y1="94" x2="1060.50" y2="104" stroke="#8a8a86" stroke-width="0.9"/>
<line x1="1066.50" y1="104" x2="1066.50" y2="450" stroke="#000" stroke-opacity="0.17" stroke-width="1"/>
<line x1="1071.50" y1="104" x2="1071.50" y2="450" stroke="#000" stroke-opacity="0.17" stroke-width="1"/>
<line x1="1071.50" y1="94" x2="1071.50" y2="104" stroke="#8a8a86" stroke-width="0.9"/>
<line x1="1076.50" y1="104" x2="1076.50" y2="450" stroke="#000" stroke-opacity="0.17" stroke-width="1"/>
<line x1="1081.50" y1="104" x2="1081.50" y2="450" stroke="#000" stroke-opacity="0.6" stroke-width="1"/>
<line x1="1081.50" y1="94" x2="1081.50" y2="104" stroke="#000" stroke-width="1.3"/>
<line x1="1087.50" y1="104" x2="1087.50" y2="450" stroke="#000" stroke-opacity="0.17" stroke-width="1"/>
<line x1="1092.50" y1="104" x2="1092.50" y2="450" stroke="#000" stroke-opacity="0.17" stroke-width="1"/>
<line x1="1092.50" y1="94" x2="1092.50" y2="104" stroke="#8a8a86" stroke-width="0.9"/>
</svg>
<span class="t" style="left:333.50px;top:67.73px;font-size:13.2px;color:#909090;font-weight:bold;transform:scaleX(0.9500);">1</span>
<span class="t" style="left:333.70px;top:86.91px;font-size:11.8px;color:#00dede;font-weight:bold;transform:scaleX(0.9500);">1</span>
<span class="t" style="left:374.86px;top:89.83px;font-size:10.6px;color:#dcdcdc;transform:scaleX(0.8800);">2</span>
<span class="t" style="left:416.62px;top:89.83px;font-size:10.6px;color:#dcdcdc;transform:scaleX(0.8800);">3</span>
<span class="t" style="left:458.38px;top:89.83px;font-size:10.6px;color:#dcdcdc;transform:scaleX(0.8800);">4</span>
<span class="t" style="left:500.44px;top:86.91px;font-size:11.8px;color:#00dede;font-weight:bold;">2</span>
<span class="t" style="left:541.90px;top:89.83px;font-size:10.6px;color:#dcdcdc;transform:scaleX(0.8800);">2</span>
<span class="t" style="left:583.66px;top:89.83px;font-size:10.6px;color:#dcdcdc;transform:scaleX(0.8800);">3</span>
<span class="t" style="left:625.42px;top:89.83px;font-size:10.6px;color:#dcdcdc;transform:scaleX(0.8800);">4</span>
<span class="t" style="left:667.58px;top:67.73px;font-size:13.2px;color:#909090;font-weight:bold;transform:scaleX(0.9500);">2</span>
<span class="t" style="left:667.78px;top:86.91px;font-size:11.8px;color:#00dede;font-weight:bold;transform:scaleX(0.9500);">1</span>
<span class="t" style="left:708.94px;top:89.83px;font-size:10.6px;color:#dcdcdc;transform:scaleX(0.8800);">2</span>
<span class="t" style="left:750.70px;top:89.83px;font-size:10.6px;color:#dcdcdc;transform:scaleX(0.8800);">3</span>
<span class="t" style="left:792.46px;top:89.83px;font-size:10.6px;color:#dcdcdc;transform:scaleX(0.8800);">4</span>
<span class="t" style="left:834.52px;top:86.91px;font-size:11.8px;color:#00dede;font-weight:bold;">2</span>
<span class="t" style="left:875.98px;top:89.83px;font-size:10.6px;color:#dcdcdc;transform:scaleX(0.8800);">2</span>
<span class="t" style="left:917.74px;top:89.83px;font-size:10.6px;color:#dcdcdc;transform:scaleX(0.8800);">3</span>
<span class="t" style="left:959.50px;top:89.83px;font-size:10.6px;color:#dcdcdc;transform:scaleX(0.8800);">4</span>
<span class="t" style="left:1001.66px;top:67.73px;font-size:13.2px;color:#909090;font-weight:bold;transform:scaleX(0.9500);">3</span>
<span class="t" style="left:1001.86px;top:86.91px;font-size:11.8px;color:#00dede;font-weight:bold;transform:scaleX(0.9500);">1</span>
<span class="t" style="left:1043.02px;top:89.83px;font-size:10.6px;color:#dcdcdc;transform:scaleX(0.8800);">2</span>
<span class="t" style="left:1084.78px;top:89.83px;font-size:10.6px;color:#dcdcdc;transform:scaleX(0.8800);">3</span>
<span class="t" style="left:315.59px;top:221.11px;font-size:10.5px;color:#7a7a7a;transform:scaleX(0.8500);">C6</span>
<div style="position:absolute;left:331px;top:276px;width:30px;height:20px;box-sizing:border-box;border:1px solid #fff;background:#2b4b4b;"></div>
<div style="position:absolute;left:331px;top:282px;width:30px;height:1px;background:#fff;"></div>
<span class="t" style="left:333.40px;top:281.17px;font-size:10.2px;color:#fff;transform:scaleX(0.9200);">A</span>
<span class="t" style="left:340.08px;top:286.29px;font-size:8.4px;color:#8aa3a3;transform:scaleX(0.9000);">1:100</span>
<div style="position:absolute;left:371px;top:276px;width:30px;height:20px;box-sizing:border-box;border:1px solid #fff;background:#2b4b4b;"></div>
<div style="position:absolute;left:371px;top:286px;width:30px;height:1px;background:#fff;"></div>
<span class="t" style="left:373.40px;top:281.17px;font-size:10.2px;color:#fff;transform:scaleX(0.9200);">A</span>
<span class="t" style="left:384.29px;top:286.29px;font-size:8.4px;color:#8aa3a3;transform:scaleX(0.9000);">1:62</span>
<div style="position:absolute;left:413px;top:276px;width:30px;height:20px;box-sizing:border-box;border:1px solid #fff;background:#2b4b4b;"></div>
<div style="position:absolute;left:413px;top:282px;width:30px;height:1px;background:#fff;"></div>
<span class="t" style="left:415.40px;top:281.17px;font-size:10.2px;color:#fff;transform:scaleX(0.9200);">A</span>
<span class="t" style="left:426.29px;top:286.29px;font-size:8.4px;color:#8aa3a3;transform:scaleX(0.9000);">1:92</span>
<div style="position:absolute;left:455px;top:276px;width:30px;height:20px;box-sizing:border-box;border:1px solid #fff;background:#2b4b4b;"></div>
<div style="position:absolute;left:455px;top:283px;width:30px;height:1px;background:#fff;"></div>
<span class="t" style="left:457.40px;top:281.17px;font-size:10.2px;color:#fff;transform:scaleX(0.9200);">A</span>
<span class="t" style="left:468.29px;top:286.29px;font-size:8.4px;color:#8aa3a3;transform:scaleX(0.9000);">1:84</span>
<div style="position:absolute;left:497px;top:276px;width:30px;height:20px;box-sizing:border-box;border:1px solid #fff;background:#2b4b4b;"></div>
<div style="position:absolute;left:497px;top:284px;width:30px;height:1px;background:#fff;"></div>
<span class="t" style="left:499.40px;top:281.17px;font-size:10.2px;color:#fff;transform:scaleX(0.9200);">A</span>
<span class="t" style="left:510.29px;top:286.29px;font-size:8.4px;color:#8aa3a3;transform:scaleX(0.9000);">1:79</span>
<div style="position:absolute;left:538px;top:276px;width:30px;height:20px;box-sizing:border-box;border:1px solid #fff;background:#2b4b4b;"></div>
<div style="position:absolute;left:538px;top:284px;width:30px;height:1px;background:#fff;"></div>
<span class="t" style="left:540.40px;top:281.17px;font-size:10.2px;color:#fff;transform:scaleX(0.9200);">A</span>
<span class="t" style="left:551.29px;top:286.29px;font-size:8.4px;color:#8aa3a3;transform:scaleX(0.9000);">1:81</span>
<div style="position:absolute;left:665px;top:276px;width:30px;height:20px;box-sizing:border-box;border:1px solid #fff;background:#2b4b4b;"></div>
<div style="position:absolute;left:665px;top:282px;width:30px;height:1px;background:#fff;"></div>
<span class="t" style="left:667.40px;top:281.17px;font-size:10.2px;color:#fff;transform:scaleX(0.9200);">A</span>
<span class="t" style="left:678.29px;top:286.29px;font-size:8.4px;color:#8aa3a3;transform:scaleX(0.9000);">1:93</span>
<div style="position:absolute;left:706px;top:276px;width:30px;height:20px;box-sizing:border-box;border:1px solid #fff;background:#2b4b4b;"></div>
<div style="position:absolute;left:706px;top:285px;width:30px;height:1px;background:#fff;"></div>
<span class="t" style="left:708.40px;top:281.17px;font-size:10.2px;color:#fff;transform:scaleX(0.9200);">A</span>
<span class="t" style="left:719.29px;top:286.29px;font-size:8.4px;color:#8aa3a3;transform:scaleX(0.9000);">1:71</span>
<div style="position:absolute;left:748px;top:276px;width:30px;height:20px;box-sizing:border-box;border:1px solid #fff;background:#2b4b4b;"></div>
<div style="position:absolute;left:748px;top:283px;width:30px;height:1px;background:#fff;"></div>
<span class="t" style="left:750.40px;top:281.17px;font-size:10.2px;color:#fff;transform:scaleX(0.9200);">A</span>
<span class="t" style="left:761.29px;top:286.29px;font-size:8.4px;color:#8aa3a3;transform:scaleX(0.9000);">1:90</span>
<div style="position:absolute;left:790px;top:276px;width:30px;height:20px;box-sizing:border-box;border:1px solid #fff;background:#2b4b4b;"></div>
<div style="position:absolute;left:790px;top:286px;width:30px;height:1px;background:#fff;"></div>
<span class="t" style="left:792.40px;top:281.17px;font-size:10.2px;color:#fff;transform:scaleX(0.9200);">A</span>
<span class="t" style="left:803.29px;top:286.29px;font-size:8.4px;color:#8aa3a3;transform:scaleX(0.9000);">1:65</span>
<div style="position:absolute;left:581px;top:276px;width:19px;height:20px;box-sizing:border-box;border:1px solid #fff;background:#591c96;"></div>
<div style="position:absolute;left:581px;top:282px;width:19px;height:1px;background:#fff;"></div>
<span class="t" style="left:583.40px;top:281.57px;font-size:10.2px;color:#fff;transform:scaleX(0.9200);">A</span>
<div style="position:absolute;left:602px;top:236px;width:19px;height:20px;box-sizing:border-box;border:1px solid #fff;background:#591c96;"></div>
<div style="position:absolute;left:602px;top:244px;width:19px;height:1px;background:#fff;"></div>
<span class="t" style="left:604.40px;top:241.57px;font-size:10.2px;color:#fff;transform:scaleX(0.9200);">B</span>
<div style="position:absolute;left:622px;top:216px;width:19px;height:20px;box-sizing:border-box;border:1px solid #fff;background:#591c96;"></div>
<div style="position:absolute;left:622px;top:223px;width:19px;height:1px;background:#fff;"></div>
<span class="t" style="left:624.40px;top:221.57px;font-size:10.2px;color:#fff;transform:scaleX(0.9200);">C</span>
<div style="position:absolute;left:643px;top:176px;width:19px;height:20px;box-sizing:border-box;border:1px solid #fff;background:#591c96;"></div>
<div style="position:absolute;left:643px;top:182px;width:19px;height:1px;background:#fff;"></div>
<span class="t" style="left:645.40px;top:181.57px;font-size:10.2px;color:#fff;transform:scaleX(0.9200);">D</span>
<div style="position:absolute;left:832px;top:276px;width:6px;height:20px;box-sizing:border-box;border:1px solid #fff;background:#2b4b4b;"></div>
<div style="position:absolute;left:832px;top:282px;width:6px;height:1px;background:#fff;"></div>
<div style="position:absolute;left:846px;top:276px;width:6px;height:20px;box-sizing:border-box;border:1px solid #fff;background:#2b4b4b;"></div>
<div style="position:absolute;left:846px;top:285px;width:6px;height:1px;background:#fff;"></div>
<div style="position:absolute;left:860px;top:276px;width:6px;height:20px;box-sizing:border-box;border:1px solid #fff;background:#2b4b4b;"></div>
<div style="position:absolute;left:860px;top:285px;width:6px;height:1px;background:#fff;"></div>
<div style="position:absolute;left:874px;top:276px;width:20px;height:20px;box-sizing:border-box;border:1px solid #fff;background:#2b4b4b;"></div>
<div style="position:absolute;left:874px;top:285px;width:20px;height:1px;background:#fff;"></div>
<span class="t" style="left:876.40px;top:281.17px;font-size:10.2px;color:#fff;transform:scaleX(0.9200);">A</span>
<div style="position:absolute;left:916px;top:276px;width:6px;height:20px;box-sizing:border-box;border:1px solid #fff;background:#2b4b4b;"></div>
<div style="position:absolute;left:916px;top:282px;width:6px;height:1px;background:#fff;"></div>
<div style="position:absolute;left:929px;top:276px;width:6px;height:20px;box-sizing:border-box;border:1px solid #fff;background:#2b4b4b;"></div>
<div style="position:absolute;left:929px;top:285px;width:6px;height:1px;background:#fff;"></div>
<div style="position:absolute;left:943px;top:276px;width:6px;height:20px;box-sizing:border-box;border:1px solid #fff;background:#2b4b4b;"></div>
<div style="position:absolute;left:943px;top:285px;width:6px;height:1px;background:#fff;"></div>
<div style="position:absolute;left:957px;top:276px;width:20px;height:20px;box-sizing:border-box;border:1px solid #fff;background:#2b4b4b;"></div>
<div style="position:absolute;left:957px;top:285px;width:20px;height:1px;background:#fff;"></div>
<span class="t" style="left:959.40px;top:281.17px;font-size:10.2px;color:#fff;transform:scaleX(0.9200);">A</span>
<div style="position:absolute;left:1095px;top:104px;width:5px;height:346px;background:#000;"></div>
<div style="position:absolute;left:1095px;top:227px;width:5px;height:69px;background:#3c4418;"></div>
<div style="position:absolute;left:1100px;top:52px;width:99px;height:30px;background:#647c85;border-radius:5px;"></div>
<span class="t" style="left:1102.80px;top:61.64px;font-size:12px;color:#eef3f5;transform:scaleX(0.9256);">0.Flauta 1</span>
<div style="position:absolute;left:1100px;top:82px;width:99px;height:368px;background:#16301f;"></div>
<div style="position:absolute;left:1100px;top:82px;width:99px;height:30px;background:linear-gradient(rgb(4, 73, 4),rgb(4, 71, 4));border-radius:3px;"></div>
<span class="t" style="left:1102.80px;top:92.04px;font-size:12px;color:#84a284;transform:scaleX(0.8300);">1.Petit flauta</span>
<div style="position:absolute;left:1100px;top:112px;width:99px;height:30px;background:linear-gradient(rgb(4, 71, 4),rgb(4, 69, 4));border-radius:3px;"></div>
<span class="t" style="left:1102.80px;top:122.04px;font-size:12px;color:#84a284;transform:scaleX(0.8300);">2.Oboes (2)</span>
<div style="position:absolute;left:1100px;top:142px;width:99px;height:30px;background:linear-gradient(rgb(4, 70, 4),rgb(4, 68, 4));border-radius:3px;"></div>
<span class="t" style="left:1102.80px;top:152.04px;font-size:12px;color:#84a284;transform:scaleX(0.8300);">3.Clarinete (A)(2)</span>
<div style="position:absolute;left:1100px;top:172px;width:99px;height:30px;background:linear-gradient(rgb(4, 69, 4),rgb(4, 67, 4));border-radius:3px;"></div>
<span class="t" style="left:1102.80px;top:182.04px;font-size:12px;color:#84a284;transform:scaleX(0.8300);">4.Basson (2)</span>
<div style="position:absolute;left:1100px;top:202px;width:99px;height:30px;background:linear-gradient(rgb(4, 68, 4),rgb(4, 66, 4));border-radius:3px;"></div>
<span class="t" style="left:1102.80px;top:212.04px;font-size:12px;color:#84a284;transform:scaleX(0.8300);">5.Corno (A) Rev.tra...</span>
<div style="position:absolute;left:1100px;top:232px;width:99px;height:30px;background:linear-gradient(rgb(4, 67, 4),rgb(4, 65, 4));border-radius:3px;"></div>
<span class="t" style="left:1102.80px;top:242.04px;font-size:12px;color:#84a284;transform:scaleX(0.8050);">6.Corno (E) Rev tran...</span>
<div style="position:absolute;left:1100px;top:262px;width:99px;height:30px;background:linear-gradient(rgb(4, 66, 4),rgb(4, 64, 4));border-radius:3px;"></div>
<span class="t" style="left:1102.80px;top:272.04px;font-size:12px;color:#84a284;transform:scaleX(0.8300);">7.Corno en D (trans...</span>
<div style="position:absolute;left:1100px;top:292px;width:99px;height:30px;background:linear-gradient(rgb(4, 65, 4),rgb(4, 63, 4));border-radius:3px;"></div>
<span class="t" style="left:1102.80px;top:302.04px;font-size:12px;color:#84a284;transform:scaleX(0.8300);">8.Trompetas (A) (2)</span>
<div style="position:absolute;left:1100px;top:322px;width:99px;height:30px;background:linear-gradient(rgb(4, 64, 4),rgb(4, 62, 4));border-radius:3px;"></div>
<span class="t" style="left:1102.80px;top:332.04px;font-size:12px;color:#84a284;transform:scaleX(0.8300);">9.Trombones (3)</span>
<div style="position:absolute;left:1100px;top:352px;width:99px;height:30px;background:linear-gradient(rgb(4, 63, 4),rgb(4, 61, 4));border-radius:3px;"></div>
<span class="t" style="left:1102.80px;top:362.04px;font-size:12px;color:#84a284;transform:scaleX(0.8300);">10.Timbales</span>
<div style="position:absolute;left:1100px;top:382px;width:99px;height:30px;background:linear-gradient(rgb(4, 62, 4),rgb(4, 60, 4));border-radius:3px;"></div>
<span class="t" style="left:1102.80px;top:392.04px;font-size:12px;color:#84a284;transform:scaleX(0.8300);">11.Triangulo</span>
<div style="position:absolute;left:1100px;top:412px;width:99px;height:30px;background:linear-gradient(rgb(4, 61, 4),rgb(4, 59, 4));border-radius:3px;"></div>
<span class="t" style="left:1102.80px;top:422.04px;font-size:12px;color:#84a284;transform:scaleX(0.8300);">12.Gran Caja y plati...</span>
<div style="position:absolute;left:1100px;top:442px;width:99px;height:8px;background:#043a04;border-radius:3px 3px 0 0;"></div>
<svg width="1199" height="704" viewBox="0 0 1199 704"><g fill="none" stroke="#e9ebec" stroke-width="0.9" stroke-linecap="round">
<path d="M251.8 56.6 L275.8 77 Q281 80.4 287.8 81.2 Q297 83.6 303.7 85.8 Q316 88 329.4 90"/>
<path d="M263.2 82.4 Q266 80 268.7 79 L275 80.4" stroke-width="1.1"/>
<path d="M309 104 Q306.6 92 308.2 82 Q308.6 70 310.6 59.6" stroke-width="0.9"/>
<path d="M309.8 104 Q312 92 317.6 82 Q321 72 325.4 60.6" stroke-width="0.8"/>
<path d="M309.6 104 Q316 96 323 91.6 Q326 90 329.6 92.6" stroke-width="1.2"/>
<path d="M306 103.6 Q305.6 90 302 82.6 Q300 78.6 296.6 76.6" stroke-width="0.8"/>
<path d="M304.6 103 Q303 98 300 96" stroke-width="0.7"/>
<path d="M308.4 104 L307 93 M310.6 104 Q315 95 320 88" stroke-width="1.3"/>
<path d="M303 86 Q310 87 318 82 Q324 84 329 86.6" stroke-width="0.9"/>
</g><g fill="#eef0f0">
<circle cx="251.9" cy="56.5" r="1.1"/>
<circle cx="262.6" cy="67.6" r="0.9"/>
<circle cx="260.4" cy="64.6" r="0.6"/>
<circle cx="269.7" cy="73.9" r="0.9"/>
<circle cx="268.7" cy="78.7" r="1.7"/>
<circle cx="274" cy="82.4" r="1.2"/>
<circle cx="279" cy="79.4" r="1.7"/>
<circle cx="282.6" cy="78" r="1.4"/>
<circle cx="287" cy="83.6" r="1.7"/>
<circle cx="326" cy="94.8" r="1.7"/>
<circle cx="329" cy="89.6" r="1.1"/>
<circle cx="307.4" cy="82.6" r="2.0"/>
<circle cx="309.6" cy="87" r="1.6"/>
<circle cx="309.4" cy="92.6" r="1.9"/>
<circle cx="318.6" cy="76.8" r="2.0"/>
<circle cx="321.6" cy="81" r="1.6"/>
<circle cx="322.6" cy="86" r="1.6"/>
<circle cx="317" cy="84.6" r="1.3"/>
<circle cx="313" cy="88" r="1.2"/>
<circle cx="324.6" cy="62.6" r="0.8"/>
<circle cx="324.8" cy="66.6" r="0.9"/>
<circle cx="310.2" cy="62" r="0.6"/>
<ellipse cx="296.4" cy="88.6" rx="3.2" ry="2.2" transform="rotate(25 296.4 88.6)"/>
</g></svg>
<div style="position:absolute;left:2px;top:452px;width:1196px;height:245.5px;background:#000;border-radius:6px;"></div>
<svg width="229" height="245" viewBox="2 452 229 245" style="left:2px;top:452px;overflow:hidden;border-radius:6px 0 0 6px;">
<defs><radialGradient id="pg" cx="172" cy="545" r="1" gradientUnits="userSpaceOnUse" gradientTransform="translate(172 545) scale(135 118) translate(-172 -545)"><stop offset="0" stop-color="#317358"/><stop offset="0.4" stop-color="#205842"/><stop offset="0.7" stop-color="#0d3024"/><stop offset="0.9" stop-color="#030f0b"/><stop offset="1" stop-color="#000"/></radialGradient><linearGradient id="pl" x1="30" y1="0" x2="112" y2="0" gradientUnits="userSpaceOnUse"><stop offset="0" stop-color="#000" stop-opacity="1"/><stop offset="1" stop-color="#000" stop-opacity="0"/></linearGradient><linearGradient id="pb" x1="0" y1="628" x2="0" y2="684" gradientUnits="userSpaceOnUse"><stop offset="0" stop-color="#000" stop-opacity="0"/><stop offset="1" stop-color="#000" stop-opacity="1"/></linearGradient><filter id="b1" x="-30%" y="-30%" width="160%" height="160%"><feGaussianBlur stdDeviation="1.2"/></filter><filter id="b2" x="-30%" y="-30%" width="160%" height="160%"><feGaussianBlur stdDeviation="2.5"/></filter><filter id="b4" x="-40%" y="-40%" width="180%" height="180%"><feGaussianBlur stdDeviation="5"/></filter></defs>
<rect x="2" y="452" width="229" height="245" fill="#000"/>
<rect x="2" y="452" width="229" height="245" fill="url(#pg)"/>
<ellipse cx="190" cy="518" rx="30" ry="27" fill="#66a286" opacity=".45" filter="url(#b4)"/>
<ellipse cx="128" cy="540" rx="22" ry="14" fill="#5c9a7c" opacity=".3" filter="url(#b4)"/>
<polygon points="196,470 235,470 235,524" fill="#0f3527" opacity=".8" filter="url(#b2)"/>
<ellipse cx="98" cy="498" rx="38" ry="34" fill="#04120d" opacity=".55" filter="url(#b4)"/>
<line x1="121" y1="472" x2="144.5" y2="549" stroke="#9ccbb2" stroke-width="2.2" opacity=".8" filter="url(#b1)"/>
<circle cx="142" cy="494.6" r="5" fill="#418f70" opacity=".8" filter="url(#b1)"/><circle cx="144.4" cy="508.8" r="5.2" fill="#62ab8b" opacity=".8" filter="url(#b1)"/>
<ellipse cx="72" cy="588" rx="40" ry="28" fill="#030d09" opacity=".75" filter="url(#b4)"/>
<line x1="88" y1="552" x2="150" y2="567" stroke="#0a2219" stroke-width="9" filter="url(#b1)"/>
<ellipse cx="157" cy="556" rx="19" ry="7.5" fill="#c9e2d1" filter="url(#b1)" transform="rotate(-12 157 556)"/>
<ellipse cx="171" cy="564" rx="8.5" ry="12" fill="#afd6bd" filter="url(#b1)"/>
<ellipse cx="219" cy="562" rx="13" ry="10" fill="#bfd8c8" filter="url(#b2)"/>
<ellipse cx="199" cy="577" rx="19" ry="8" fill="#0a231a" filter="url(#b1)" transform="rotate(18 199 577)"/>
<ellipse cx="120" cy="580" rx="8" ry="10" fill="#c8d49a" opacity=".9" filter="url(#b2)"/>
<ellipse cx="177" cy="590" rx="11" ry="8" fill="#cfe09a" opacity=".9" filter="url(#b2)"/>
<polygon points="123,573 146,566 147,598 126,603" fill="#1c4f3e" filter="url(#b1)"/>
<polygon points="147,566 159,568 152,612 136,616 142,598" fill="#52a37d" filter="url(#b2)"/>
<ellipse cx="113" cy="612" rx="20" ry="16" fill="#86a590" opacity=".7" filter="url(#b4)"/>
<ellipse cx="197" cy="612" rx="36" ry="15" fill="#071c14" opacity=".85" filter="url(#b4)"/>
<ellipse cx="182" cy="637" rx="26" ry="12" fill="#1f5240" opacity=".75" filter="url(#b4)"/>
<rect x="2" y="452" width="229" height="245" fill="url(#pl)"/>
<rect x="2" y="452" width="229" height="245" fill="url(#pb)"/>
</svg>
<div class="btn" style="position:absolute;left:3px;top:453px;width:110px;height:21px;border-radius:6px;background:#1f262b;"></div>
<span class="t" style="left:42.30px;top:457.69px;font-size:11px;color:#d8dde0;transform:scaleX(0.8607);">Phrase</span>
<div class="btn" style="position:absolute;left:117px;top:453px;width:111px;height:21px;border-radius:6px;"></div>
<span class="t" style="left:158.85px;top:457.69px;font-size:11px;color:#d8dde0;transform:scaleX(0.8820);">Figure</span>
<span class="t" style="left:39.72px;top:478.44px;font-size:12px;color:#9c9c9c;font-weight:bold;transform:scaleX(0.8600);">Basic Rhythms</span>
<span class="t" style="left:57.79px;top:503.44px;font-size:12px;color:#9c9c9c;font-weight:bold;transform:scaleX(0.8600);">Melodic</span>
<span class="t" style="left:51.48px;top:528.44px;font-size:12px;color:#9c9c9c;font-weight:bold;transform:scaleX(0.8600);">Chromatic</span>
<span class="t" style="left:53.78px;top:553.44px;font-size:12px;color:#9c9c9c;font-weight:bold;transform:scaleX(0.8600);">Run / Fall</span>
<span class="t" style="left:64.95px;top:578.44px;font-size:12px;color:#9c9c9c;font-weight:bold;transform:scaleX(0.8600);">Trills</span>
<span class="t" style="left:54.35px;top:603.44px;font-size:12px;color:#9c9c9c;font-weight:bold;transform:scaleX(0.8600);">Arpeggio</span>
<span class="t" style="left:65.53px;top:628.44px;font-size:12px;color:#9c9c9c;font-weight:bold;transform:scaleX(0.8600);">User</span>
<span class="t" style="left:183.23px;top:476.44px;font-size:12px;color:#a59ca5;font-weight:bold;transform:scaleX(0.9300);">4th</span>
<span class="t" style="left:183.23px;top:496.44px;font-size:12px;color:#a59ca5;font-weight:bold;transform:scaleX(0.9300);">8th</span>
<span class="t" style="left:181.11px;top:516.44px;font-size:12px;color:#a59ca5;font-weight:bold;transform:scaleX(0.8500);">16th</span>
<span class="t" style="left:175.73px;top:536.44px;font-size:12px;color:#a59ca5;font-weight:bold;transform:scaleX(0.8500);">Combi</span>
<span class="t" style="left:183.84px;top:590.24px;font-size:12px;color:#a09aa0;font-weight:bold;transform:scaleX(0.9300);letter-spacing:1px;">4/4</span>
<span class="t" style="left:183.84px;top:610.24px;font-size:12px;color:#a09aa0;font-weight:bold;transform:scaleX(0.9300);letter-spacing:1px;">3/4</span>
<span class="t" style="left:183.84px;top:630.24px;font-size:12px;color:#a09aa0;font-weight:bold;transform:scaleX(0.9300);letter-spacing:1px;">6/8</span>
<span class="t" style="left:183.84px;top:650.24px;font-size:12px;color:#a09aa0;font-weight:bold;transform:scaleX(0.9300);letter-spacing:1px;">7/8</span>
<span class="t" style="left:183.84px;top:670.24px;font-size:12px;color:#a09aa0;font-weight:bold;transform:scaleX(0.9300);letter-spacing:1px;">5/8</span>
<div style="position:absolute;left:154px;top:477px;width:1px;height:216px;background:#8a8a8a;"></div>
<div style="position:absolute;left:159px;top:586px;width:66px;height:1px;background:#8a8a8a;"></div>
<span class="t" style="left:10.60px;top:661.91px;font-size:11.8px;color:#fff;font-weight:bold;transform:scaleX(0.9588);">O</span>
<span class="t" style="left:32.30px;top:661.91px;font-size:11.8px;color:#fff;font-weight:bold;transform:scaleX(0.7492);">?</span>
<span class="t" style="left:71.90px;top:661.91px;font-size:11.8px;color:#fff;font-weight:bold;transform:scaleX(0.7980);">C</span>
<div class="btn" style="position:absolute;left:5px;top:677px;width:70px;height:20px;border-radius:3px;background:#000;"></div>
<div class="btn" style="position:absolute;left:75px;top:677px;width:60px;height:20px;border-radius:3px;background:#000;"></div>
<span class="t" style="left:11.00px;top:680.61px;font-size:11.8px;color:#d0d6d9;transform:scaleX(1.0281);">0 oct</span>
<span class="t" style="left:81.00px;top:680.61px;font-size:11.8px;color:#d0d6d9;transform:scaleX(0.8533);">0</span>
<div style="position:absolute;left:231.2px;top:454px;width:19.80000000000001px;height:14px;background:#2fcb33;border-radius:3px;"></div>
<span class="t" style="left:233.80px;top:454.87px;font-size:11.5px;color:#0b6b12;transform:scaleX(0.8461);">low</span>
<div style="position:absolute;left:253px;top:454px;width:31.80000000000001px;height:14px;background:#2fcb33;border-radius:3px;"></div>
<span class="t" style="left:255.60px;top:454.87px;font-size:11.5px;color:#0b6b12;transform:scaleX(0.8670);">attack</span>
<div style="position:absolute;left:287px;top:454px;width:37px;height:14px;background:#2fcb33;border-radius:3px;"></div>
<span class="t" style="left:289.60px;top:454.87px;font-size:11.5px;color:#0b6b12;transform:scaleX(0.9213);">motion</span>
<div style="position:absolute;left:326px;top:454px;width:45.89999999999998px;height:14px;background:#2fcb33;border-radius:3px;"></div>
<span class="t" style="left:328.60px;top:454.87px;font-size:11.5px;color:#0b6b12;transform:scaleX(0.9096);">harmony</span>
<div style="position:absolute;left:374px;top:454px;width:43.69999999999999px;height:14px;background:#2fcb33;border-radius:3px;"></div>
<span class="t" style="left:376.60px;top:454.87px;font-size:11.5px;color:#0b6b12;transform:scaleX(0.8990);">complex</span>
<div style="position:absolute;left:419.8px;top:454px;width:32.69999999999999px;height:14px;background:#2fcb33;border-radius:3px;"></div>
<span class="t" style="left:422.40px;top:454.87px;font-size:11.5px;color:#0b6b12;transform:scaleX(0.8607);">march</span>
<div style="position:absolute;left:455.2px;top:454px;width:15.199999999999989px;height:14px;background:#2fcb33;border-radius:3px;"></div>
<span class="t" style="left:457.80px;top:454.87px;font-size:11.5px;color:#0b6b12;transform:scaleX(0.7957);">riff</span>
<div style="position:absolute;left:473.2px;top:454px;width:41.69999999999999px;height:14px;background:#2fcb33;border-radius:3px;"></div>
<span class="t" style="left:475.80px;top:454.87px;font-size:11.5px;color:#0b6b12;transform:scaleX(0.9208);">diatonic</span>
<div style="position:absolute;left:517.5px;top:454px;width:39.0px;height:14px;background:#2fcb33;border-radius:3px;"></div>
<span class="t" style="left:520.10px;top:454.87px;font-size:11.5px;color:#0b6b12;transform:scaleX(0.8527);">Tension</span>
<div style="position:absolute;left:559.4px;top:454px;width:54.80000000000007px;height:14px;background:#2fcb33;border-radius:3px;"></div>
<span class="t" style="left:562.00px;top:454.87px;font-size:11.5px;color:#0b6b12;transform:scaleX(0.9346);">pentatonic</span>
<div style="position:absolute;left:616.4px;top:454px;width:31.5px;height:14px;background:#2fcb33;border-radius:3px;"></div>
<span class="t" style="left:619.00px;top:454.87px;font-size:11.5px;color:#0b6b12;transform:scaleX(0.8570);">heavy</span>
<div style="position:absolute;left:650.5px;top:454px;width:18.399999999999977px;height:14px;background:#2fcb33;border-radius:3px;"></div>
<span class="t" style="left:653.10px;top:454.87px;font-size:11.5px;color:#0b6b12;transform:scaleX(0.7941);">run</span>
<div style="position:absolute;left:671.5px;top:454px;width:20.200000000000045px;height:14px;background:#2fcb33;border-radius:3px;"></div>
<span class="t" style="left:674.10px;top:454.87px;font-size:11.5px;color:#0b6b12;transform:scaleX(0.8094);">maj</span>
<div style="position:absolute;left:694.3px;top:454px;width:21.200000000000045px;height:14px;background:#2fcb33;border-radius:3px;"></div>
<span class="t" style="left:696.90px;top:454.87px;font-size:11.5px;color:#0b6b12;transform:scaleX(0.8634);">min</span>
<div class="btn" style="position:absolute;left:1006px;top:453px;width:133px;height:20px;border-radius:3px;background:#000;"></div>
<span class="t" style="left:1012.00px;top:456.20px;font-size:13px;color:#e4e8ea;transform:scaleX(0.9300);">factory</span>
<div class="btn" style="position:absolute;left:1141px;top:453px;width:34px;height:20px;border-radius:7px;background:#000;"></div>
<span class="t" style="left:1149.40px;top:458.27px;font-size:9.6px;color:#e4e8ea;transform:scaleX(0.8852);">New</span>
<div class="btn" style="position:absolute;left:1006px;top:475px;width:133px;height:24px;border-radius:7px;"></div>
<span class="t" style="left:1039.80px;top:481.21px;font-size:11.8px;color:#dfe4e6;transform:scaleX(0.8848);">Load package</span>
<div class="btn" style="position:absolute;left:1141px;top:475px;width:34px;height:24px;border-radius:7px;"></div>
<span class="t" style="left:1148.19px;top:482.11px;font-size:10.5px;color:#dfe4e6;transform:scaleX(0.8200);">More</span>
<svg width="1199" height="704" viewBox="0 0 1199 704">
<g><rect x="231" y="501" width="475" height="45" rx="4.5" fill="#efe9a9"/>
<rect x="231" y="514" width="475" height="1" fill="#000" shape-rendering="crispEdges"/>
<rect x="231" y="519" width="475" height="1" fill="#000" shape-rendering="crispEdges"/>
<rect x="231" y="524" width="475" height="1" fill="#000" shape-rendering="crispEdges"/>
<rect x="231" y="529" width="475" height="1" fill="#000" shape-rendering="crispEdges"/>
<rect x="231" y="534" width="475" height="1" fill="#000" shape-rendering="crispEdges"/>
<rect x="235.4" y="525.2" width="11.0" height="3.6" rx="1.7" fill="#8e8e8e"/>
<ellipse cx="234.4" cy="527.0" rx="3.4" ry="2.05" fill="#000"/>
<polyline points="232.2,531.4 237.0,534.3 232.2,537.3" fill="none" stroke="#2a2a20" stroke-width="1.1"/>
<rect x="266.8" y="525.2" width="11.0" height="3.6" rx="1.7" fill="#8e8e8e"/>
<ellipse cx="265.8" cy="527.0" rx="3.4" ry="2.05" fill="#000"/>
<rect x="296.4" y="525.2" width="11.0" height="3.6" rx="1.7" fill="#8e8e8e"/>
<ellipse cx="295.4" cy="527.0" rx="3.4" ry="2.05" fill="#000"/>
<polyline points="293.2,531.4 298.0,534.3 293.2,537.3" fill="none" stroke="#2a2a20" stroke-width="1.1"/>
<rect x="327.4" y="525.2" width="11.0" height="3.6" rx="1.7" fill="#8e8e8e"/>
<ellipse cx="326.4" cy="527.0" rx="3.4" ry="2.05" fill="#000"/>
<polyline points="324.2,531.4 329.0,534.3 324.2,537.3" fill="none" stroke="#2a2a20" stroke-width="1.1"/>
<rect x="357.4" y="525.2" width="11.0" height="3.6" rx="1.7" fill="#8e8e8e"/>
<ellipse cx="356.4" cy="527.0" rx="3.4" ry="2.05" fill="#000"/>
<polyline points="354.2,531.4 359.0,534.3 354.2,537.3" fill="none" stroke="#2a2a20" stroke-width="1.1"/>
<rect x="388.4" y="525.2" width="11.0" height="3.6" rx="1.7" fill="#8e8e8e"/>
<ellipse cx="387.4" cy="527.0" rx="3.4" ry="2.05" fill="#000"/>
<polyline points="385.2,531.4 390.0,534.3 385.2,537.3" fill="none" stroke="#2a2a20" stroke-width="1.1"/>
<rect x="418.4" y="525.2" width="11.0" height="3.6" rx="1.7" fill="#8e8e8e"/>
<ellipse cx="417.4" cy="527.0" rx="3.4" ry="2.05" fill="#000"/>
<rect x="435.0" y="522.8" width="11.0" height="3.6" rx="1.7" fill="#8e8e8e"/>
<ellipse cx="434.0" cy="524.6" rx="3.4" ry="2.05" fill="#000"/>
<rect x="450.2" y="520.2" width="11.0" height="3.6" rx="1.7" fill="#8e8e8e"/>
<ellipse cx="449.2" cy="522.0" rx="3.4" ry="2.05" fill="#000"/>
<rect x="465.0" y="517.0" width="7.0" height="3.6" rx="1.7" fill="#8e8e8e"/>
<ellipse cx="464.0" cy="518.8" rx="3.4" ry="2.05" fill="#000"/>
<rect x="480.9" y="525.2" width="11.0" height="3.6" rx="1.7" fill="#8e8e8e"/>
<ellipse cx="479.9" cy="527.0" rx="3.4" ry="2.05" fill="#000"/>
<rect x="512.7" y="525.2" width="11.0" height="3.6" rx="1.7" fill="#8e8e8e"/>
<ellipse cx="511.7" cy="527.0" rx="3.4" ry="2.05" fill="#000"/>
<rect x="542.4" y="525.2" width="11.0" height="3.6" rx="1.7" fill="#8e8e8e"/>
<ellipse cx="541.4" cy="527.0" rx="3.4" ry="2.05" fill="#000"/>
<rect x="573.2" y="525.2" width="11.0" height="3.6" rx="1.7" fill="#8e8e8e"/>
<ellipse cx="572.2" cy="527.0" rx="3.4" ry="2.05" fill="#000"/>
<ellipse cx="601.7" cy="527.0" rx="3.4" ry="2.05" fill="#000"/>
<polyline points="599.5,531.4 604.3,534.3 599.5,537.3" fill="none" stroke="#2a2a20" stroke-width="1.1"/>
<ellipse cx="611.3" cy="527.0" rx="3.4" ry="2.05" fill="#000"/>
<ellipse cx="621.7" cy="527.0" rx="3.4" ry="2.05" fill="#000"/>
<rect x="633.4" y="525.2" width="9.0" height="3.6" rx="1.7" fill="#8e8e8e"/>
<ellipse cx="632.4" cy="527.0" rx="3.4" ry="2.05" fill="#000"/>
<ellipse cx="662.7" cy="527.0" rx="3.4" ry="2.05" fill="#000"/>
<polyline points="660.5,531.4 665.3,534.3 660.5,537.3" fill="none" stroke="#2a2a20" stroke-width="1.1"/>
<ellipse cx="672.3" cy="527.0" rx="3.4" ry="2.05" fill="#000"/>
<ellipse cx="682.7" cy="527.0" rx="3.4" ry="2.05" fill="#000"/>
<rect x="694.3" y="525.2" width="10.0" height="3.6" rx="1.7" fill="#8e8e8e"/>
<ellipse cx="693.3" cy="527.0" rx="3.4" ry="2.05" fill="#000"/>
<path d="M652.6 522 L651.2 533.6" fill="none" stroke="#000" stroke-width="1.2"/><circle cx="650.4" cy="522.4" r="1.5" fill="#000"/><path d="M650.4 523.4 Q652.0 524.4 653.4 522.4" fill="none" stroke="#000" stroke-width="1"/><circle cx="650.6" cy="527" r="1.4" fill="#000"/>
<path d="M418 517.2 Q437 505.6 461.5 508.8" fill="none" stroke="#1a1a10" stroke-width="1"/><path d="M428 512 Q446 505.4 461.5 508.8" fill="none" stroke="#1a1a10" stroke-width="1.2"/><rect x="468.2" y="517.4" width="1" height="15" fill="#8a8a8a"/>
</g>
<g><rect x="708" y="501" width="475" height="45" rx="4.5" fill="#efe9a9"/>
<rect x="708" y="514" width="475" height="1" fill="#000" shape-rendering="crispEdges"/>
<rect x="708" y="519" width="475" height="1" fill="#000" shape-rendering="crispEdges"/>
<rect x="708" y="524" width="475" height="1" fill="#000" shape-rendering="crispEdges"/>
<rect x="708" y="529" width="475" height="1" fill="#000" shape-rendering="crispEdges"/>
<rect x="708" y="534" width="475" height="1" fill="#000" shape-rendering="crispEdges"/>
<rect x="713.4" y="525.2" width="54.0" height="3.6" rx="1.7" fill="#8e8e8e"/>
<ellipse cx="712.4" cy="527.0" rx="3.4" ry="2.05" fill="#000"/>
<polyline points="710.2,531.4 715.0,534.3 710.2,537.3" fill="none" stroke="#2a2a20" stroke-width="1.1"/>
<rect x="835.8" y="525.2" width="54.0" height="3.6" rx="1.7" fill="#8e8e8e"/>
<ellipse cx="834.8" cy="527.0" rx="3.4" ry="2.05" fill="#000"/>
<rect x="957.6" y="525.2" width="54.0" height="3.6" rx="1.7" fill="#8e8e8e"/>
<ellipse cx="956.6" cy="527.0" rx="3.4" ry="2.05" fill="#000"/>
<polyline points="954.4,531.4 959.2,534.3 954.4,537.3" fill="none" stroke="#2a2a20" stroke-width="1.1"/>
<rect x="1079.4" y="525.2" width="54.0" height="3.6" rx="1.7" fill="#8e8e8e"/>
<ellipse cx="1078.4" cy="527.0" rx="3.4" ry="2.05" fill="#000"/>

</g>
<g><rect x="231" y="548" width="475" height="45" rx="4.5" fill="#efe9a9"/>
<rect x="231" y="561" width="475" height="1" fill="#000" shape-rendering="crispEdges"/>
<rect x="231" y="566" width="475" height="1" fill="#000" shape-rendering="crispEdges"/>
<rect x="231" y="571" width="475" height="1" fill="#000" shape-rendering="crispEdges"/>
<rect x="231" y="576" width="475" height="1" fill="#000" shape-rendering="crispEdges"/>
<rect x="231" y="581" width="475" height="1" fill="#000" shape-rendering="crispEdges"/>
<ellipse cx="234.6" cy="574.0" rx="3.4" ry="2.05" fill="#000"/>
<circle cx="234.9" cy="580.0" r="1.75" fill="#000"/>
<ellipse cx="294.6" cy="574.0" rx="3.4" ry="2.05" fill="#000"/>
<circle cx="294.9" cy="580.0" r="1.75" fill="#000"/>
<ellipse cx="354.6" cy="574.0" rx="3.4" ry="2.05" fill="#000"/>
<circle cx="354.9" cy="580.0" r="1.75" fill="#000"/>
<ellipse cx="414.6" cy="574.0" rx="3.4" ry="2.05" fill="#000"/>
<circle cx="414.9" cy="580.0" r="1.75" fill="#000"/>
<ellipse cx="474.6" cy="574.0" rx="3.4" ry="2.05" fill="#000"/>
<circle cx="474.9" cy="580.0" r="1.75" fill="#000"/>
<ellipse cx="534.6" cy="574.0" rx="3.4" ry="2.05" fill="#000"/>
<circle cx="534.9" cy="580.0" r="1.75" fill="#000"/>
<ellipse cx="594.6" cy="574.0" rx="3.4" ry="2.05" fill="#000"/>
<circle cx="594.9" cy="580.0" r="1.75" fill="#000"/>
<ellipse cx="654.6" cy="574.0" rx="3.4" ry="2.05" fill="#000"/>
<circle cx="654.9" cy="580.0" r="1.75" fill="#000"/>

</g>
<g><rect x="708" y="548" width="475" height="45" rx="4.5" fill="#efe9a9"/>
<rect x="708" y="561" width="475" height="1" fill="#000" shape-rendering="crispEdges"/>
<rect x="708" y="566" width="475" height="1" fill="#000" shape-rendering="crispEdges"/>
<rect x="708" y="571" width="475" height="1" fill="#000" shape-rendering="crispEdges"/>
<rect x="708" y="576" width="475" height="1" fill="#000" shape-rendering="crispEdges"/>
<rect x="708" y="581" width="475" height="1" fill="#000" shape-rendering="crispEdges"/>
<rect x="713.4" y="572.2" width="7.0" height="3.6" rx="1.7" fill="#8e8e8e"/>
<ellipse cx="712.4" cy="574.0" rx="3.4" ry="2.05" fill="#000"/>
<rect x="743.3" y="572.2" width="7.0" height="3.6" rx="1.7" fill="#8e8e8e"/>
<ellipse cx="742.3" cy="574.0" rx="3.4" ry="2.05" fill="#000"/>
<rect x="773.2" y="572.2" width="7.0" height="3.6" rx="1.7" fill="#8e8e8e"/>
<ellipse cx="772.2" cy="574.0" rx="3.4" ry="2.05" fill="#000"/>
<rect x="803.2" y="572.2" width="7.0" height="3.6" rx="1.7" fill="#8e8e8e"/>
<ellipse cx="802.2" cy="574.0" rx="3.4" ry="2.05" fill="#000"/>
<rect x="833.1" y="572.2" width="7.0" height="3.6" rx="1.7" fill="#8e8e8e"/>
<ellipse cx="832.1" cy="574.0" rx="3.4" ry="2.05" fill="#000"/>
<rect x="863.0" y="572.2" width="7.0" height="3.6" rx="1.7" fill="#8e8e8e"/>
<ellipse cx="862.0" cy="574.0" rx="3.4" ry="2.05" fill="#000"/>
<rect x="892.9" y="572.2" width="7.0" height="3.6" rx="1.7" fill="#8e8e8e"/>
<ellipse cx="891.9" cy="574.0" rx="3.4" ry="2.05" fill="#000"/>
<rect x="922.8" y="572.2" width="7.0" height="3.6" rx="1.7" fill="#8e8e8e"/>
<ellipse cx="921.8" cy="574.0" rx="3.4" ry="2.05" fill="#000"/>
<rect x="952.8" y="572.2" width="7.0" height="3.6" rx="1.7" fill="#8e8e8e"/>
<ellipse cx="951.8" cy="574.0" rx="3.4" ry="2.05" fill="#000"/>
<rect x="982.7" y="572.2" width="7.0" height="3.6" rx="1.7" fill="#8e8e8e"/>
<ellipse cx="981.7" cy="574.0" rx="3.4" ry="2.05" fill="#000"/>
<rect x="1012.6" y="572.2" width="7.0" height="3.6" rx="1.7" fill="#8e8e8e"/>
<ellipse cx="1011.6" cy="574.0" rx="3.4" ry="2.05" fill="#000"/>
<rect x="1042.5" y="572.2" width="7.0" height="3.6" rx="1.7" fill="#8e8e8e"/>
<ellipse cx="1041.5" cy="574.0" rx="3.4" ry="2.05" fill="#000"/>
<rect x="1072.4" y="572.2" width="7.0" height="3.6" rx="1.7" fill="#8e8e8e"/>
<ellipse cx="1071.4" cy="574.0" rx="3.4" ry="2.05" fill="#000"/>
<rect x="1102.4" y="572.2" width="7.0" height="3.6" rx="1.7" fill="#8e8e8e"/>
<ellipse cx="1101.4" cy="574.0" rx="3.4" ry="2.05" fill="#000"/>
<rect x="1132.3" y="572.2" width="7.0" height="3.6" rx="1.7" fill="#8e8e8e"/>
<ellipse cx="1131.3" cy="574.0" rx="3.4" ry="2.05" fill="#000"/>
<ellipse cx="1161.2" cy="574.0" rx="3.4" ry="2.05" fill="#000"/>

</g>
<g><rect x="231" y="595" width="475" height="45" rx="4.5" fill="#efe9a9"/>
<rect x="231" y="608" width="475" height="1" fill="#000" shape-rendering="crispEdges"/>
<rect x="231" y="613" width="475" height="1" fill="#000" shape-rendering="crispEdges"/>
<rect x="231" y="618" width="475" height="1" fill="#000" shape-rendering="crispEdges"/>
<rect x="231" y="623" width="475" height="1" fill="#000" shape-rendering="crispEdges"/>
<rect x="231" y="628" width="475" height="1" fill="#000" shape-rendering="crispEdges"/>
<rect x="236.0" y="619.2" width="11.0" height="3.6" rx="1.7" fill="#8e8e8e"/>
<ellipse cx="235.0" cy="621.0" rx="3.4" ry="2.05" fill="#000"/>
<circle cx="235.3" cy="627.0" r="1.75" fill="#000"/>
<rect x="358.4" y="619.2" width="11.0" height="3.6" rx="1.7" fill="#8e8e8e"/>
<ellipse cx="357.4" cy="621.0" rx="3.4" ry="2.05" fill="#000"/>
<circle cx="357.7" cy="627.0" r="1.75" fill="#000"/>
<rect x="480.8" y="619.2" width="11.0" height="3.6" rx="1.7" fill="#8e8e8e"/>
<ellipse cx="479.8" cy="621.0" rx="3.4" ry="2.05" fill="#000"/>
<circle cx="480.1" cy="627.0" r="1.75" fill="#000"/>
<rect x="603.2" y="619.2" width="11.0" height="3.6" rx="1.7" fill="#8e8e8e"/>
<ellipse cx="602.2" cy="621.0" rx="3.4" ry="2.05" fill="#000"/>
<circle cx="602.5" cy="627.0" r="1.75" fill="#000"/>
<ellipse cx="296.2" cy="621.0" rx="3.4" ry="2.05" fill="#000"/>
<polyline points="294.0,625.4 298.8,628.3 294.0,631.3" fill="none" stroke="#2a2a20" stroke-width="1.1"/>
<ellipse cx="418.6" cy="621.0" rx="3.4" ry="2.05" fill="#000"/>
<polyline points="416.4,625.4 421.2,628.3 416.4,631.3" fill="none" stroke="#2a2a20" stroke-width="1.1"/>
<ellipse cx="541.0" cy="621.0" rx="3.4" ry="2.05" fill="#000"/>
<polyline points="538.8,625.4 543.6,628.3 538.8,631.3" fill="none" stroke="#2a2a20" stroke-width="1.1"/>
<ellipse cx="663.4" cy="621.0" rx="3.4" ry="2.05" fill="#000"/>
<polyline points="661.2,625.4 666.0,628.3 661.2,631.3" fill="none" stroke="#2a2a20" stroke-width="1.1"/>
<ellipse cx="326.8" cy="621.0" rx="3.4" ry="2.05" fill="#000"/>
<ellipse cx="449.2" cy="621.0" rx="3.4" ry="2.05" fill="#000"/>
<ellipse cx="571.6" cy="621.0" rx="3.4" ry="2.05" fill="#000"/>
<ellipse cx="694.0" cy="621.0" rx="3.4" ry="2.05" fill="#000"/>

</g>
<g><rect x="708" y="595" width="475" height="45" rx="4.5" fill="#efe9a9"/>
<rect x="708" y="608" width="475" height="1" fill="#000" shape-rendering="crispEdges"/>
<rect x="708" y="613" width="475" height="1" fill="#000" shape-rendering="crispEdges"/>
<rect x="708" y="618" width="475" height="1" fill="#000" shape-rendering="crispEdges"/>
<rect x="708" y="623" width="475" height="1" fill="#000" shape-rendering="crispEdges"/>
<rect x="708" y="628" width="475" height="1" fill="#000" shape-rendering="crispEdges"/>
<rect x="713.0" y="619.2" width="17.0" height="3.6" rx="1.7" fill="#8e8e8e"/>
<ellipse cx="712.0" cy="621.0" rx="3.4" ry="2.05" fill="#000"/>
<circle cx="712.3" cy="627.0" r="1.75" fill="#000"/>
<rect x="835.4" y="619.2" width="17.0" height="3.6" rx="1.7" fill="#8e8e8e"/>
<ellipse cx="834.4" cy="621.0" rx="3.4" ry="2.05" fill="#000"/>
<circle cx="834.7" cy="627.0" r="1.75" fill="#000"/>
<rect x="896.6" y="619.2" width="17.0" height="3.6" rx="1.7" fill="#8e8e8e"/>
<ellipse cx="895.6" cy="621.0" rx="3.4" ry="2.05" fill="#000"/>
<circle cx="895.9" cy="627.0" r="1.75" fill="#000"/>
<rect x="957.8" y="619.2" width="17.0" height="3.6" rx="1.7" fill="#8e8e8e"/>
<ellipse cx="956.8" cy="621.0" rx="3.4" ry="2.05" fill="#000"/>
<circle cx="957.1" cy="627.0" r="1.75" fill="#000"/>
<rect x="1080.2" y="619.2" width="17.0" height="3.6" rx="1.7" fill="#8e8e8e"/>
<ellipse cx="1079.2" cy="621.0" rx="3.4" ry="2.05" fill="#000"/>
<circle cx="1079.5" cy="627.0" r="1.75" fill="#000"/>
<rect x="1141.4" y="619.2" width="17.0" height="3.6" rx="1.7" fill="#8e8e8e"/>
<ellipse cx="1140.4" cy="621.0" rx="3.4" ry="2.05" fill="#000"/>
<circle cx="1140.7" cy="627.0" r="1.75" fill="#000"/>
<ellipse cx="773.2" cy="621.0" rx="3.4" ry="2.05" fill="#000"/>
<polyline points="771.0,625.4 775.8,628.3 771.0,631.3" fill="none" stroke="#2a2a20" stroke-width="1.1"/>
<ellipse cx="1018.0" cy="621.0" rx="3.4" ry="2.05" fill="#000"/>
<polyline points="1015.8,625.4 1020.6,628.3 1015.8,631.3" fill="none" stroke="#2a2a20" stroke-width="1.1"/>
<ellipse cx="803.8" cy="621.0" rx="3.4" ry="2.05" fill="#000"/>
<ellipse cx="1048.6" cy="621.0" rx="3.4" ry="2.05" fill="#000"/>

</g>
<g><rect x="231" y="642" width="475" height="45" rx="4.5" fill="#efe9a9"/>
<rect x="231" y="655" width="475" height="1" fill="#000" shape-rendering="crispEdges"/>
<rect x="231" y="660" width="475" height="1" fill="#000" shape-rendering="crispEdges"/>
<rect x="231" y="665" width="475" height="1" fill="#000" shape-rendering="crispEdges"/>
<rect x="231" y="670" width="475" height="1" fill="#000" shape-rendering="crispEdges"/>
<rect x="231" y="675" width="475" height="1" fill="#000" shape-rendering="crispEdges"/>
<rect x="235.6" y="666.2" width="50.0" height="3.6" rx="1.7" fill="#8e8e8e"/>
<ellipse cx="234.6" cy="668.0" rx="3.4" ry="2.05" fill="#000"/>
<circle cx="234.9" cy="674.0" r="1.75" fill="#000"/>
<ellipse cx="516.4" cy="668.0" rx="3.4" ry="2.05" fill="#000"/>
<polyline points="514.2,672.4 519.0,675.3 514.2,678.3" fill="none" stroke="#2a2a20" stroke-width="1.1"/>
<ellipse cx="550.8" cy="668.0" rx="3.4" ry="2.05" fill="#000"/>
<rect x="586.6" y="666.2" width="9.0" height="3.6" rx="1.7" fill="#8e8e8e"/>
<ellipse cx="585.6" cy="668.0" rx="3.4" ry="2.05" fill="#000"/>
<circle cx="585.9" cy="674.0" r="1.75" fill="#000"/>
<rect x="657.0" y="666.2" width="16.0" height="3.6" rx="1.7" fill="#8e8e8e"/>
<ellipse cx="656.0" cy="668.0" rx="3.4" ry="2.05" fill="#000"/>
<circle cx="656.3" cy="674.0" r="1.75" fill="#000"/>
<path d="M359.6 662.2 L361.6 665.6 L359.8 668.8 L362.0 672 Q357.4 671.4 360.4 674.6" fill="none" stroke="#000" stroke-width="1.5" stroke-linejoin="round"/>
<path d="M624.8 663 L623.4 674.6" fill="none" stroke="#000" stroke-width="1.2"/><circle cx="622.6" cy="663.4" r="1.5" fill="#000"/><path d="M622.6 664.4 Q624.2 665.4 625.6 663.4" fill="none" stroke="#000" stroke-width="1"/><circle cx="622.8" cy="668" r="1.4" fill="#000"/>

</g>
<g><rect x="708" y="642" width="475" height="45" rx="4.5" fill="#efe9a9"/>
<rect x="708" y="655" width="475" height="1" fill="#000" shape-rendering="crispEdges"/>
<rect x="708" y="660" width="475" height="1" fill="#000" shape-rendering="crispEdges"/>
<rect x="708" y="665" width="475" height="1" fill="#000" shape-rendering="crispEdges"/>
<rect x="708" y="670" width="475" height="1" fill="#000" shape-rendering="crispEdges"/>
<rect x="708" y="675" width="475" height="1" fill="#000" shape-rendering="crispEdges"/>
<ellipse cx="711.8" cy="668.0" rx="3.4" ry="2.05" fill="#000"/>
<polyline points="709.6,672.4 714.4,675.3 709.6,678.3" fill="none" stroke="#2a2a20" stroke-width="1.1"/>
<ellipse cx="752.0" cy="668.0" rx="3.4" ry="2.05" fill="#000"/>
<rect x="794.8" y="666.2" width="9.0" height="3.6" rx="1.7" fill="#8e8e8e"/>
<ellipse cx="793.8" cy="668.0" rx="3.4" ry="2.05" fill="#000"/>
<circle cx="794.1" cy="674.0" r="1.75" fill="#000"/>
<rect x="1042.8" y="666.2" width="54.0" height="3.6" rx="1.7" fill="#8e8e8e"/>
<ellipse cx="1041.8" cy="668.0" rx="3.4" ry="2.05" fill="#000"/>
<circle cx="1042.1" cy="674.0" r="1.75" fill="#000"/>
<rect x="835.2" y="665.6" width="5" height="3" fill="#000"/>

</g>
</svg>
<span class="t" style="left:448.09px;top:532.78px;font-size:11.6px;color:#6a6a5e;transform:scaleX(0.9000);">phrase 1</span>
<span class="t" style="left:927.57px;top:532.78px;font-size:11.6px;color:#6a6a5e;transform:scaleX(0.9000);">basic-1</span>
<span class="t" style="left:449.43px;top:579.78px;font-size:11.6px;color:#6a6a5e;transform:scaleX(0.9000);">attack-1</span>
<span class="t" style="left:926.03px;top:579.78px;font-size:11.6px;color:#6a6a5e;transform:scaleX(0.9000);">attack-2</span>
<span class="t" style="left:449.43px;top:626.78px;font-size:11.6px;color:#6a6a5e;transform:scaleX(0.9000);">attack-3</span>
<span class="t" style="left:926.03px;top:626.78px;font-size:11.6px;color:#6a6a5e;transform:scaleX(0.9000);">attack-4</span>
<span class="t" style="left:455.53px;top:673.78px;font-size:11.6px;color:#6a6a5e;transform:scaleX(0.9000);">low-1</span>
<span class="t" style="left:932.13px;top:673.78px;font-size:11.6px;color:#6a6a5e;transform:scaleX(0.9000);">low-2</span>
<span class="t" style="left:1047.00px;top:681.64px;font-size:12px;color:#078a07;font-weight:bold;transform:scaleX(1.0947);">1011</span>
<div style="position:absolute;left:1082px;top:677px;width:31px;height:20px;background:#2a353d;border:1px solid #6d7a80;box-sizing:border-box;"></div>
<span class="t" style="left:1087.00px;top:684.36px;font-size:9.5px;color:#e8e8e8;transform:scaleX(0.9000);">8</span>
<div class="btn" style="position:absolute;left:1113px;top:677px;width:20px;height:20px;background:#000;border-radius:7px;"></div>
<span class="t" style="left:1120.53px;top:682.24px;font-size:9.4px;color:#fff;transform:scaleX(0.9000);">&lt;</span>
<div style="position:absolute;left:1134px;top:677px;width:30px;height:20px;background:#2a353d;border:1px solid #6d7a80;box-sizing:border-box;"></div>
<span class="t" style="left:1141.00px;top:683.09px;font-size:11px;color:#7c8a90;transform:scaleX(0.9000);">1</span>
<div class="btn" style="position:absolute;left:1165px;top:677px;width:21px;height:20px;background:#000;border-radius:7px;"></div>
<span class="t" style="left:1173.03px;top:682.24px;font-size:9.4px;color:#fff;transform:scaleX(0.9000);">&gt;</span>
<svg width="1199" height="704" viewBox="0 0 1199 704">
<path d="M55.2 672.4 C50 668 47.4 666 47.4 663.8 C47.4 660.4 52.6 659.6 55.2 663 C57.8 659.6 63 660.4 63 663.8 C63 666 60.4 668 55.2 672.4 Z" fill="#e8474a"/>
<polyline points="48.6,685 55.1,690.3 61.6,685" fill="none" stroke="#fff" stroke-width="1.7" stroke-linecap="round" stroke-linejoin="round"/>
<polyline points="108.3,685 114.8,690.3 121.3,685" fill="none" stroke="#fff" stroke-width="1.7" stroke-linecap="round" stroke-linejoin="round"/>
<polyline points="1112.5,460 1119.5,465.6 1126.5,460" fill="none" stroke="#fff" stroke-width="2" stroke-linecap="round" stroke-linejoin="round"/>
<circle cx="1185.9" cy="463.3" r="9.6" fill="#8c8c8c"/><path d="M1181.9 459.3 L1189.9 467.3 M1189.9 459.3 L1181.9 467.3" stroke="#000" stroke-width="1.2"/>
<line x1="1192" y1="697" x2="1199" y2="690" stroke="#777" stroke-width="1"/>
<line x1="1188" y1="697" x2="1199" y2="686" stroke="#777" stroke-width="1"/>
<line x1="1184" y1="697" x2="1199" y2="682" stroke="#777" stroke-width="1"/>
</svg>
</div>
</body></html>
